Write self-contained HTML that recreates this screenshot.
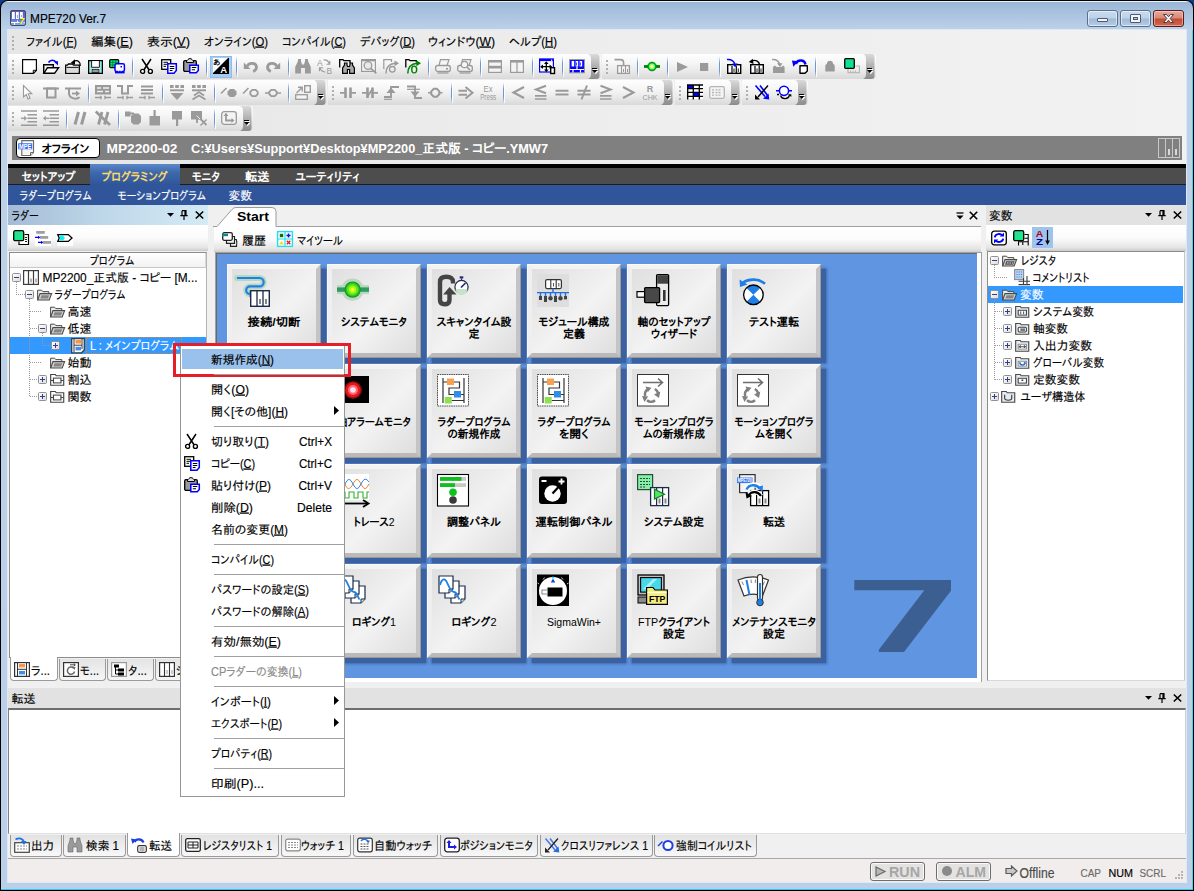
<!DOCTYPE html>
<html lang="ja"><head><meta charset="utf-8"><title>MPE720 Ver.7</title>
<style>
html,body{margin:0;padding:0}
body{width:1194px;height:891px;overflow:hidden;position:relative;background:#000;font-family:"Liberation Sans","IPAPGothic","IPAGothic","Noto Sans CJK JP",sans-serif;font-size:12px}
div{position:absolute;box-sizing:border-box}
svg{position:absolute;overflow:visible}
svg.txt{left:0;top:0;font-family:"Liberation Sans","IPAPGothic","IPAGothic","Noto Sans CJK JP",sans-serif}
</style></head>
<body>
<div style="left:0px;top:0px;width:1194px;height:891px;background:#0d3f8f"></div>
<div style="left:0px;top:0px;width:1194px;height:891px;border-radius:8px 8px 0 0;background:#000"></div>
<div style="left:1px;top:1px;width:1192px;height:889px;border-radius:7px 7px 0 0;background:linear-gradient(#e9f1f9 0,#e9f1f9 1px,#9ab6d6 1px,#a5bfdc 9px,#bcd2e9 29px,#b9d0e8 100%)"></div>
<div style="left:1192px;top:30px;width:1px;height:860px;background:#3fd2f2"></div>
<div style="left:1px;top:889px;width:1192px;height:1px;background:#2fc8ec"></div>
<div style="left:7px;top:29px;width:1180px;height:854px;background:#dfe9f4"></div>
<div class="client" style="left:8px;top:30px;width:1178px;height:852px;background:#f0f0f0"></div>
<div style="left:8px;top:30px;width:1178px;height:134px;background:linear-gradient(90deg,#e6e6e6 0,#ececec 40%,#f2f2f2 100%)"></div>
<svg style="left:10px;top:10px" width="16" height="16" viewBox="0 0 16 16"><defs><linearGradient id="tig" x1="0" y1="0" x2="0" y2="1"><stop offset="0" stop-color="#5656cc"/><stop offset=".6" stop-color="#5f74dc"/><stop offset="1" stop-color="#86b4f4"/></linearGradient></defs><rect x=".5" y=".5" width="15" height="15" rx="1.6" fill="url(#tig)" stroke="#4a4a52" stroke-width="1"/><rect x="2" y="2" width="2.8" height="7" fill="#fff"/><rect x="6" y="2" width="2.8" height="7" fill="#fff"/><rect x="10" y="2" width="2.8" height="6.5" fill="#fff"/><path d="M7.4 5V8M11.4 5V7" stroke="#888" stroke-width=".8"/><path d="M1 12.5H9.5M4.5 12.5V15M7.5 10.5V12.5" stroke="#fff" stroke-width="1"/><rect x="13.6" y="12" width="1" height="1.4" fill="#fff"/><text x="9.6" y="14.2" font-size="8.5" font-weight="bold" font-style="italic" fill="#ffff00" font-family="Liberation Sans,sans-serif">7</text></svg>
<div style="left:1087px;top:10px;width:31px;height:17px;border:1px solid #5a6f8c;border-radius:3px;background:linear-gradient(#c9dbef 0,#bcd1e8 48%,#9fbad7 52%,#b4cde6 100%);box-shadow:inset 0 0 0 1px rgba(255,255,255,.55)"></div>
<div style="left:1120px;top:10px;width:31px;height:17px;border:1px solid #5a6f8c;border-radius:3px;background:linear-gradient(#c9dbef 0,#bcd1e8 48%,#9fbad7 52%,#b4cde6 100%);box-shadow:inset 0 0 0 1px rgba(255,255,255,.55)"></div>
<div style="left:1153px;top:10px;width:31px;height:17px;border:1px solid #5a1a1a;border-radius:3px;background:linear-gradient(#e8a99a 0,#d98875 48%,#c24a32 52%,#d0674c 100%);box-shadow:inset 0 0 0 1px rgba(255,255,255,.4)"></div>
<div style="left:1097px;top:18px;width:11px;height:4px;background:#f4f4f4;border:1px solid #4a5a78;border-radius:1px"></div>
<div style="left:1130px;top:14px;width:11px;height:9px;background:#f4f4f4;border:1px solid #4a5a78;border-radius:1px"></div>
<div style="left:1133px;top:17px;width:5px;height:3px;background:#a9c2de;border:1px solid #4a5a78"></div>
<svg style="left:1162px;top:13px" width="13" height="11" viewBox="0 0 13 11"><path d="M1.5 1.5 L4.5 1.5 L6.5 3.8 L8.5 1.5 L11.5 1.5 L8.2 5.5 L11.5 9.5 L8.5 9.5 L6.5 7.2 L4.5 9.5 L1.5 9.5 L4.8 5.5 Z" fill="#f6f6f6" stroke="#4a3a4a" stroke-width="1"/></svg>
<div style="left:12px;top:36px;width:2px;height:2px;background:#b0b0b0"></div>
<div style="left:12px;top:40px;width:2px;height:2px;background:#b0b0b0"></div>
<div style="left:12px;top:44px;width:2px;height:2px;background:#b0b0b0"></div>
<div style="left:12px;top:48px;width:2px;height:2px;background:#b0b0b0"></div>
<div style="left:12px;top:136px;width:1170px;height:24px;background:#808080"></div>
<div style="left:16px;top:138px;width:84px;height:20px;background:#fff;border:1.3px solid #000;border-radius:4px"></div>
<svg style="left:18px;top:140px" width="17" height="17" viewBox="0 0 17 17"><path d="M3.8 .7H15.5V12.5L12.5 15.5H3.8Z" fill="#fff" stroke="#6a6a6a" stroke-width="1.2"/><path d="M15.5 12.5H12.5V15.5" fill="#ddd" stroke="#6a6a6a" stroke-width="1"/><path d="M5.5 11h7M5.5 13h5" stroke="#e8c8c8" stroke-width="1" stroke-dasharray="1 1"/><rect x=".2" y="3.3" width="14" height="6" fill="#2a6af0"/><text x="7.2" y="8.6" font-size="6.6" font-weight="bold" fill="#fff" text-anchor="middle" textLength="12.5" lengthAdjust="spacingAndGlyphs" font-family="Liberation Sans,sans-serif">MPE</text></svg>
<div style="left:1158px;top:138px;width:22px;height:20px;border:1px solid #c8c8c8"></div>
<div style="left:1165px;top:138px;width:1px;height:20px;background:#c8c8c8"></div>
<div style="left:1172px;top:138px;width:1px;height:20px;background:#c8c8c8"></div>
<div style="left:1168px;top:149px;width:2px;height:6px;background:#d8d8d8"></div>
<div style="left:1175px;top:149px;width:2px;height:6px;background:#d8d8d8"></div>
<div style="left:8px;top:164px;width:1178px;height:4px;background:#000"></div>
<div style="left:8px;top:168px;width:1178px;height:17px;background:#4d4d4d;border-bottom:1px solid #1c1c1c"></div>
<div style="left:90px;top:164px;width:90px;height:21px;background:linear-gradient(#5b86c8 0,#3f69ad 40%,#2f5599 100%)"></div>
<div style="left:8px;top:185px;width:1178px;height:20px;background:#30559b"></div>
<div style="left:8px;top:54px;width:593px;height:25px;background:linear-gradient(#fefefe 0,#f6f6f6 35%,#ebebeb 65%,#d9d9d9 100%);border-radius:0 3px 4px 0"></div>
<div style="left:12px;top:60px;width:2px;height:2px;background:#b0b0b0"></div>
<div style="left:12px;top:64px;width:2px;height:2px;background:#b0b0b0"></div>
<div style="left:12px;top:68px;width:2px;height:2px;background:#b0b0b0"></div>
<div style="left:12px;top:72px;width:2px;height:2px;background:#b0b0b0"></div>
<svg style="left:21px;top:58px" width="16" height="16" viewBox="0 0 16 16"><path d="M1.6 1.6H15.4V12.5L12.5 15.4H1.6Z" fill="#fff" stroke="#000" stroke-width="1.15"/><path d="M15.2 12.3H12.3V15.2" fill="none" stroke="#000" stroke-width="1"/></svg>
<svg style="left:43px;top:58px" width="16" height="16" viewBox="0 0 16 16"><path d="M.7 15.3V6.7H10.3V9.5" fill="none" stroke="#000" stroke-width="1.4"/><path d="M.8 15.3L4.5 9.7H15.6L11.6 15.3Z" fill="#fff" stroke="#000" stroke-width="1.4"/><path d="M5.5 4.5C7.5 1.2 11.5 1.5 13.2 4.8" fill="none" stroke="#0000ff" stroke-width="1.5"/><path d="M10.8 3.2H15V7.6Z" fill="#0000ff"/></svg>
<svg style="left:65px;top:58px" width="16" height="16" viewBox="0 0 16 16"><path d="M.7 15.3V7.2H2.5L3.5 6H7.5L8.5 7.2H14.3V15.3Z" fill="#fff" stroke="#000" stroke-width="1.3"/><rect x="2" y="9.5" width="11" height="4.6" fill="#dcdcdc"/><path d="M1.5 9.3H13.5" stroke="#000" stroke-width="1"/><path d="M15.2 8C15.8 3.8 12.5 1.6 9 3.2" fill="none" stroke="#000" stroke-width="1.3"/><path d="M5.8 4.8L10 1.2V6.8Z" fill="#000"/></svg>
<svg style="left:87px;top:58px" width="16" height="16" viewBox="0 0 16 16"><rect x="1.7" y="2.7" width="13.6" height="12.6" fill="#fff" stroke="#000" stroke-width="1.4"/><path d="M3.2 3.5V14.5M13.8 3.5V14.5" stroke="#20d8d8" stroke-width="1.6" stroke-dasharray="1 1"/><path d="M4.4 10.2H12.6" stroke="#20d8d8" stroke-width="1.2" stroke-dasharray="1 1"/><path d="M4.6 3V9.3H12.4V3" fill="#fff" stroke="#000" stroke-width=".9"/><rect x="5" y="11.6" width="7" height="3" fill="#9a9a9a" stroke="#000" stroke-width=".7"/></svg>
<svg style="left:109px;top:58px" width="16" height="16" viewBox="0 0 16 16"><rect x=".7" y="1.7" width="9" height="8" rx="1" fill="#00f070" stroke="#000" stroke-width="1.2"/><path d="M1 4.4H9.5M1 7H9.5M3.8 2V9.5M6.8 2V9.5" stroke="#004818" stroke-width=".55"/><rect x="6" y="5.8" width="9.4" height="7.6" rx="1.5" fill="#fff" stroke="#0000ff" stroke-width="1.5"/><rect x="11.5" y="8" width="1.5" height="1.5" fill="#0000ff"/><path d="M6 14.6H15.6" stroke="#0000ff" stroke-width="1.6"/><path d="M9 12.8h1.2M11.5 12.8h1.2" stroke="#fff" stroke-width="1"/></svg>
<div style="left:132px;top:57px;width:1px;height:20px;background:linear-gradient(rgba(120,160,220,.1),#6f97d8 30%,#6f97d8 70%,rgba(120,160,220,.1))"></div>
<div style="left:133px;top:57px;width:1px;height:20px;background:rgba(255,255,255,.9)"></div>
<svg style="left:139px;top:58px" width="16" height="16" viewBox="0 0 16 16"><path d="M3 1L10.2 12M12 1L4.8 12" stroke="#000" stroke-width="1.5" fill="none"/><circle cx="3.6" cy="13.4" r="2" fill="#fff" stroke="#000" stroke-width="1.4"/><circle cx="11.4" cy="13.4" r="2" fill="#fff" stroke="#000" stroke-width="1.4"/></svg>
<svg style="left:161px;top:58px" width="16" height="16" viewBox="0 0 16 16"><rect x=".7" y="1.7" width="9" height="9.6" fill="#fff" stroke="#000" stroke-width="1.3"/><path d="M2.5 4.3H7M2.5 6.3H6M2.5 8.3H5" stroke="#000" stroke-width="1"/><path d="M6.8 5.8H15.3V12.5L13 15.3H6.8Z" fill="#fff" stroke="#0000ff" stroke-width="1.5"/><path d="M8.8 8.5H13.3M8.8 10.5H13.3M8.8 12.5H11.5" stroke="#000" stroke-width="1"/></svg>
<svg style="left:183px;top:58px" width="16" height="16" viewBox="0 0 16 16"><rect x=".7" y="2.7" width="12.6" height="10.6" rx="1.2" fill="#9a9a9a" stroke="#000" stroke-width="1.3"/><path d="M3.5 4.5V3L5 1.5L6 .7H8L9 1.5L10.5 3V4.5Z" fill="#ddd" stroke="#000" stroke-width="1"/><path d="M6.8 7.2H15.3V12.5L13.3 14.8H6.8Z" fill="#fff" stroke="#0000ff" stroke-width="1.5"/><path d="M8.8 9.5H13.3M8.8 11.8H12" stroke="#000" stroke-width="1.1"/></svg>
<div style="left:206px;top:57px;width:1px;height:20px;background:linear-gradient(rgba(120,160,220,.1),#6f97d8 30%,#6f97d8 70%,rgba(120,160,220,.1))"></div>
<div style="left:207px;top:57px;width:1px;height:20px;background:rgba(255,255,255,.9)"></div>
<div style="left:210px;top:56px;width:22px;height:22px;background:#a9cdf2;border:1px solid #8bbcf0"></div>
<svg style="left:213px;top:58px" width="16" height="16" viewBox="0 0 16 16"><rect x="0" y="0" width="16" height="16" fill="#000"/><path d="M0 0H15L0 15Z" fill="#fff"/><text x=".2" y="7.2" font-size="7.5" fill="#000" font-weight="bold">あ</text><text x="7.2" y="15.3" font-size="9.5" fill="#fff" font-weight="bold">A</text></svg>
<div style="left:236px;top:57px;width:1px;height:20px;background:linear-gradient(rgba(120,160,220,.1),#6f97d8 30%,#6f97d8 70%,rgba(120,160,220,.1))"></div>
<div style="left:237px;top:57px;width:1px;height:20px;background:rgba(255,255,255,.9)"></div>
<svg style="left:243px;top:58px" width="16" height="16" viewBox="0 0 16 16"><path d="M.8 4.4V11H7.4Z" fill="#9a9a9a"/><path d="M4.2 8.4C5.5 4.5 12.4 4 13.4 8.5C13.8 10.7 12.3 12.5 10.2 13.6" fill="none" stroke="#9a9a9a" stroke-width="2.8"/></svg>
<svg style="left:265px;top:58px" width="16" height="16" viewBox="0 0 16 16"><path d="M15.2 4.4V11H8.6Z" fill="#9a9a9a"/><path d="M11.8 8.4C10.5 4.5 3.6 4 2.6 8.5C2.2 10.7 3.7 12.5 5.8 13.6" fill="none" stroke="#9a9a9a" stroke-width="2.8"/></svg>
<div style="left:288px;top:57px;width:1px;height:20px;background:linear-gradient(rgba(120,160,220,.1),#6f97d8 30%,#6f97d8 70%,rgba(120,160,220,.1))"></div>
<div style="left:289px;top:57px;width:1px;height:20px;background:rgba(255,255,255,.9)"></div>
<svg style="left:295px;top:58px" width="16" height="16" viewBox="0 0 16 16"><path d="M3 1H6V3L7 6.5H9L10 3V1H13V3L15.8 9V15.5H10V10H6V15.5H.2V9L3 3Z" fill="#9a9a9a"/></svg>
<svg style="left:317px;top:58px" width="16" height="16" viewBox="0 0 16 16"><text x="0" y="8" font-size="8.5" fill="#9a9a9a">A</text><text x="9.5" y="15.8" font-size="8.5" fill="#9a9a9a">B</text><path d="M6.5 2C9.5 1.5 11.5 3.5 12.3 5.8M12.8 2.8V6.3H9.5" fill="none" stroke="#9a9a9a" stroke-width="1.1"/><path d="M8.5 14C5.5 14 4 12.5 3 10.2M2.5 13.3V9.8H6" fill="none" stroke="#9a9a9a" stroke-width="1.1"/></svg>
<svg style="left:339px;top:58px" width="16" height="16" viewBox="0 0 16 16"><path d="M.7 9.5V1.7H4L5 2.7H11V5" fill="none" stroke="#000" stroke-width="1.3"/><path d="M5.5 5H8V7L8.5 8.5H10.5L11 7V5H13.5V7L15.4 10V15.3H10.6V11.5H8.4V15.3H3.6V10L5.5 7Z" fill="#aaa" stroke="#000" stroke-width="1.2"/></svg>
<svg style="left:361px;top:58px" width="16" height="16" viewBox="0 0 16 16"><rect x=".6" y="1.6" width="13.8" height="11.8" fill="#f4f4f4" stroke="#9a9a9a" stroke-width="1.2"/><path d="M.6 2.3H14.4" stroke="#9a9a9a" stroke-width="2"/><circle cx="7" cy="7.5" r="3.8" fill="#e8e8e8" stroke="#9a9a9a" stroke-width="1.3"/><path d="M9.8 10.3L15.3 15.3" stroke="#9a9a9a" stroke-width="1.8"/></svg>
<svg style="left:383px;top:58px" width="16" height="16" viewBox="0 0 16 16"><path d="M.8 11V1.6H8.5V4" fill="none" stroke="#9a9a9a" stroke-width="1.2"/><path d="M3 15.5C3 10 6 6 12 5.3" fill="none" stroke="#9a9a9a" stroke-width="1.4"/><path d="M11.5 2.5L16 5.3L11.5 8.2Z" fill="#9a9a9a"/><circle cx="9.3" cy="11.3" r="2.8" fill="none" stroke="#9a9a9a" stroke-width="1.3"/></svg>
<svg style="left:405px;top:58px" width="16" height="16" viewBox="0 0 16 16"><path d="M.8 9.5V1.6H4L5 2.6H11.3V4.2" fill="none" stroke="#000" stroke-width="1.3"/><path d="M2.8 15.5C2.8 10 6 6 12 5.3" fill="none" stroke="#008000" stroke-width="1.5"/><path d="M11.3 2.2L16 5.2L11.3 8.2Z" fill="#008000"/><ellipse cx="9.2" cy="11.5" rx="2.5" ry="3.4" fill="none" stroke="#008000" stroke-width="1.4"/></svg>
<div style="left:428px;top:57px;width:1px;height:20px;background:linear-gradient(rgba(120,160,220,.1),#6f97d8 30%,#6f97d8 70%,rgba(120,160,220,.1))"></div>
<div style="left:429px;top:57px;width:1px;height:20px;background:rgba(255,255,255,.9)"></div>
<svg style="left:435px;top:58px" width="16" height="16" viewBox="0 0 16 16"><path d="M4 7.5L5.5 1.6H14L12 7.5" fill="#f4f4f4" stroke="#9a9a9a" stroke-width="1.2"/><rect x=".7" y="7.5" width="14.6" height="6" rx="2" fill="#f0f0f0" stroke="#9a9a9a" stroke-width="1.3"/><path d="M2.5 15H13.5" stroke="#9a9a9a" stroke-width="1.2"/><rect x="11" y="10" width="2" height="1.6" fill="#9a9a9a"/></svg>
<svg style="left:457px;top:58px" width="16" height="16" viewBox="0 0 16 16"><path d="M4 7.5L5.5 1.6H14L12 7.5" fill="#f4f4f4" stroke="#9a9a9a" stroke-width="1.2"/><rect x=".7" y="7.5" width="14.6" height="6" rx="2" fill="#f0f0f0" stroke="#9a9a9a" stroke-width="1.3"/><path d="M2.5 15H13.5" stroke="#9a9a9a" stroke-width="1.2"/><circle cx="7.5" cy="6.5" r="3.2" fill="#f4f4f4" stroke="#9a9a9a" stroke-width="1.2"/><path d="M9.8 9L13 12" stroke="#9a9a9a" stroke-width="1.6"/></svg>
<div style="left:480px;top:57px;width:1px;height:20px;background:linear-gradient(rgba(120,160,220,.1),#6f97d8 30%,#6f97d8 70%,rgba(120,160,220,.1))"></div>
<div style="left:481px;top:57px;width:1px;height:20px;background:rgba(255,255,255,.9)"></div>
<svg style="left:487px;top:58px" width="16" height="16" viewBox="0 0 16 16"><rect x="1.6" y="2.6" width="12.8" height="5.8" fill="#f4f4f4" stroke="#9a9a9a" stroke-width="1.2"/><rect x="1.6" y="8.6" width="12.8" height="5.8" fill="#f4f4f4" stroke="#9a9a9a" stroke-width="1.2"/><path d="M1.6 3.5H14.4M1.6 9.5H14.4" stroke="#9a9a9a" stroke-width="2.2"/></svg>
<svg style="left:509px;top:58px" width="16" height="16" viewBox="0 0 16 16"><rect x="1.6" y="2.6" width="12.8" height="11.8" fill="#f4f4f4" stroke="#9a9a9a" stroke-width="1.2"/><path d="M1.6 3.5H14.4" stroke="#9a9a9a" stroke-width="2.2"/><path d="M8 2.6V14.4" stroke="#9a9a9a" stroke-width="1.2"/></svg>
<div style="left:532px;top:57px;width:1px;height:20px;background:linear-gradient(rgba(120,160,220,.1),#6f97d8 30%,#6f97d8 70%,rgba(120,160,220,.1))"></div>
<div style="left:533px;top:57px;width:1px;height:20px;background:rgba(255,255,255,.9)"></div>
<svg style="left:539px;top:58px" width="16" height="16" viewBox="0 0 16 16"><rect x=".6" y="1" width="13.8" height="13" fill="#fff" stroke="#0000ff" stroke-width="1.2"/><path d="M.6 2H14.4" stroke="#0000ff" stroke-width="2.2"/><rect x="12" y="1.6" width="1.2" height="1.2" fill="#fff"/><path d="M7.3 4.5V13M2.5 8.7H12" stroke="#000" stroke-width="1.3"/><path d="M7.3 3.2L9.6 6H5ZM7.3 14.2L9.6 11.4H5ZM1.2 8.7L4 6.4V11ZM13.2 8.7L10.6 6.4V11Z" fill="#000"/><rect x="11.7" y="9.7" width="3.8" height="5.8" fill="#fff" stroke="#000" stroke-width="1.4"/></svg>
<div style="left:562px;top:57px;width:1px;height:20px;background:linear-gradient(rgba(120,160,220,.1),#6f97d8 30%,#6f97d8 70%,rgba(120,160,220,.1))"></div>
<div style="left:563px;top:57px;width:1px;height:20px;background:rgba(255,255,255,.9)"></div>
<svg style="left:569px;top:58px" width="16" height="16" viewBox="0 0 16 16"><rect x=".6" y="1.6" width="14.8" height="13.2" fill="#0000ff" stroke="#9a9a9a" stroke-width="1"/><rect x="2.6" y="3" width="2.6" height="5.5" fill="#fff"/><rect x="6.6" y="3" width="2.6" height="5.5" fill="#fff"/><rect x="10.6" y="3" width="2.6" height="5.5" fill="#fff"/><path d="M7.4 4.5V7.5M11.4 4.5V7.5" stroke="#0000ff" stroke-width=".8"/><path d="M1 11.5H15M8 8.5V11.5M4 11.5V14.5M11.5 11.5V14.5" stroke="#fff" stroke-width="1.2"/></svg>
<svg style="left:588px;top:54px" width="12" height="25" viewBox="0 0 12 25"><defs><linearGradient id="ov1" x1="0" y1="0" x2="0" y2="1"><stop offset="0" stop-color="#dadada"/><stop offset=".45" stop-color="#b4b4b4"/><stop offset="1" stop-color="#8c8c8c"/></linearGradient></defs><path d="M0 0H9Q11.5 0 11.5 2.5V22Q11.5 25 8.5 25H0Q3 24 3 20V5Q3 1 0 0Z" fill="url(#ov1)"/><path d="M5 15.5H10" stroke="#fff" stroke-width="1"/><path d="M4 14.5H9" stroke="#000" stroke-width="1"/><path d="M5 17H10.5L7.7 20.2Z" fill="#fff"/><path d="M4 16H9.4L6.7 19Z" fill="#000"/></svg>
<div style="left:602px;top:54px;width:274px;height:25px;background:linear-gradient(#fefefe 0,#f6f6f6 35%,#ebebeb 65%,#d9d9d9 100%);border-radius:0 3px 4px 0"></div>
<div style="left:606px;top:60px;width:2px;height:2px;background:#b0b0b0"></div>
<div style="left:606px;top:64px;width:2px;height:2px;background:#b0b0b0"></div>
<div style="left:606px;top:68px;width:2px;height:2px;background:#b0b0b0"></div>
<div style="left:606px;top:72px;width:2px;height:2px;background:#b0b0b0"></div>
<svg style="left:614px;top:58px" width="16" height="16" viewBox="0 0 16 16"><path d="M.5 1.6H6.5C8.5 1.6 9.6 3 9.6 5V7.5" fill="none" stroke="#9a9a9a" stroke-width="1.6"/><rect x="3.6" y="7.6" width="11.8" height="7.8" fill="#f4f4f4" stroke="#9a9a9a" stroke-width="1.3"/><path d="M7.5 7.6V15.4M11.5 7.6V15.4" stroke="#9a9a9a" stroke-width="1.1"/><path d="M9.5 11V14M13.5 11V14" stroke="#9a9a9a" stroke-width="1"/></svg>
<div style="left:637px;top:57px;width:1px;height:20px;background:linear-gradient(rgba(120,160,220,.1),#6f97d8 30%,#6f97d8 70%,rgba(120,160,220,.1))"></div>
<div style="left:638px;top:57px;width:1px;height:20px;background:rgba(255,255,255,.9)"></div>
<svg style="left:644px;top:58px" width="16" height="16" viewBox="0 0 16 16"><path d="M0 8.5H16" stroke="#008000" stroke-width="2.8"/><circle cx="8" cy="8.5" r="4.3" fill="#00c000" stroke="#008000" stroke-width="1"/><circle cx="8" cy="8.5" r="3" fill="#40ffc0"/><circle cx="8" cy="8.5" r="2.3" fill="#c8ff30"/><circle cx="8" cy="8.5" r="1.3" fill="#ffffd0"/></svg>
<div style="left:667px;top:57px;width:1px;height:20px;background:linear-gradient(rgba(120,160,220,.1),#6f97d8 30%,#6f97d8 70%,rgba(120,160,220,.1))"></div>
<div style="left:668px;top:57px;width:1px;height:20px;background:rgba(255,255,255,.9)"></div>
<svg style="left:674px;top:58px" width="16" height="16" viewBox="0 0 16 16"><path d="M3 4V14L14 9Z" fill="#9a9a9a"/></svg>
<svg style="left:696px;top:58px" width="16" height="16" viewBox="0 0 16 16"><rect x="4" y="5" width="8.2" height="8" fill="#9a9a9a"/></svg>
<div style="left:719px;top:57px;width:1px;height:20px;background:linear-gradient(rgba(120,160,220,.1),#6f97d8 30%,#6f97d8 70%,rgba(120,160,220,.1))"></div>
<div style="left:720px;top:57px;width:1px;height:20px;background:rgba(255,255,255,.9)"></div>
<svg style="left:726px;top:58px" width="16" height="16" viewBox="0 0 16 16"><rect x="1.7" y="6.7" width="13" height="8.6" fill="#fff" stroke="#000" stroke-width="1.4"/><path d="M6 8V15M10.3 8V15" stroke="#000" stroke-width="1.2"/><path d="M8 10.5V14M12.3 10.5V14" stroke="#000" stroke-width=".9"/><path d="M1 1.6C5 1 8.5 3 9 7" fill="none" stroke="#0000ff" stroke-width="1.5"/><path d="M6.3 5.5H11.8L9 9.3Z" fill="#0000ff"/></svg>
<svg style="left:748px;top:58px" width="16" height="16" viewBox="0 0 16 16"><rect x="2.7" y="6.7" width="12.6" height="8.6" fill="#fff" stroke="#000" stroke-width="1.4"/><path d="M7 8V15M11.2 8V15" stroke="#000" stroke-width="1.2"/><path d="M9 10.5V14M13 10.5V14" stroke="#000" stroke-width=".9"/><path d="M3 3.5C7 1 11.5 3 11.5 7.5" fill="none" stroke="#000" stroke-width="1.4"/><path d="M4.8 0.8L.8 4L5.5 6Z" fill="#000"/></svg>
<svg style="left:770px;top:58px" width="16" height="16" viewBox="0 0 16 16"><path d="M2 1.6C6 1.3 9 3.5 9.8 7" fill="none" stroke="#9a9a9a" stroke-width="1.4"/><path d="M7 5.3H12.5L10 9Z" fill="#9a9a9a"/><path d="M3 9L5 7.6L6.5 9H11.5L13 7.6L14.6 9V15H3Z" fill="#9a9a9a"/></svg>
<svg style="left:792px;top:58px" width="16" height="16" viewBox="0 0 16 16"><path d="M4 6C5 1.5 12.5 1 13.5 6.5" fill="none" stroke="#0000ff" stroke-width="2.4"/><path d="M0 2.6L6.3 3.3L1.3 8.8Z" fill="#0000ff"/><path d="M8 7.7H15.3V13L13 15.3H8Z" fill="#fff" stroke="#000" stroke-width="1.4" stroke-linejoin="round"/></svg>
<div style="left:815px;top:57px;width:1px;height:20px;background:linear-gradient(rgba(120,160,220,.1),#6f97d8 30%,#6f97d8 70%,rgba(120,160,220,.1))"></div>
<div style="left:816px;top:57px;width:1px;height:20px;background:rgba(255,255,255,.9)"></div>
<svg style="left:822px;top:58px" width="16" height="16" viewBox="0 0 16 16"><path d="M3.3 13.5V8C3.3 6.8 4 6.3 4.8 6C5 1.6 11 1.6 11.2 6C12 6.3 12.7 6.8 12.7 8V13.5Z" fill="#9a9a9a"/></svg>
<svg style="left:844px;top:58px" width="16" height="16" viewBox="0 0 16 16"><rect x=".7" y=".7" width="9.6" height="9.6" rx="1" fill="#10e090" stroke="#000" stroke-width="1.3"/><path d="M4 11V14.6H15.4V8H11.5" fill="none" stroke="#b8b8b8" stroke-width="1.2"/><path d="M6.5 12.5V14M9 12.5V14M11.5 12.5V14" stroke="#b8b8b8" stroke-width="1"/></svg>
<svg style="left:863px;top:54px" width="12" height="25" viewBox="0 0 12 25"><defs><linearGradient id="ov2" x1="0" y1="0" x2="0" y2="1"><stop offset="0" stop-color="#dadada"/><stop offset=".45" stop-color="#b4b4b4"/><stop offset="1" stop-color="#8c8c8c"/></linearGradient></defs><path d="M0 0H9Q11.5 0 11.5 2.5V22Q11.5 25 8.5 25H0Q3 24 3 20V5Q3 1 0 0Z" fill="url(#ov2)"/><path d="M5 15.5H10" stroke="#fff" stroke-width="1"/><path d="M4 14.5H9" stroke="#000" stroke-width="1"/><path d="M5 17H10.5L7.7 20.2Z" fill="#fff"/><path d="M4 16H9.4L6.7 19Z" fill="#000"/></svg>
<div style="left:8px;top:80px;width:319px;height:25px;background:linear-gradient(#fefefe 0,#f6f6f6 35%,#ebebeb 65%,#d9d9d9 100%);border-radius:0 3px 4px 0"></div>
<div style="left:12px;top:86px;width:2px;height:2px;background:#b0b0b0"></div>
<div style="left:12px;top:90px;width:2px;height:2px;background:#b0b0b0"></div>
<div style="left:12px;top:94px;width:2px;height:2px;background:#b0b0b0"></div>
<div style="left:12px;top:98px;width:2px;height:2px;background:#b0b0b0"></div>
<svg style="left:21px;top:84px" width="16" height="16" viewBox="0 0 16 16"><path d="M2.5 1.5V13L5.2 10.5L7 15L9 14.2L7.2 9.8H10.8Z" fill="#fff" stroke="#9a9a9a" stroke-width="1.1"/></svg>
<svg style="left:43px;top:84px" width="16" height="16" viewBox="0 0 16 16"><path d="M0 4.5H16" stroke="#9a9a9a" stroke-width="2"/><rect x="4" y="4.5" width="8.5" height="9" fill="none" stroke="#9a9a9a" stroke-width="2"/></svg>
<svg style="left:65px;top:84px" width="16" height="16" viewBox="0 0 16 16"><path d="M0 4.5H16" stroke="#9a9a9a" stroke-width="2"/><path d="M4 4.5V9C4 15.5 13 15.5 14.5 13" fill="none" stroke="#9a9a9a" stroke-width="2"/><path d="M7 9.5H12" stroke="#9a9a9a" stroke-width="1.8"/><path d="M11 6.5L15 9.5L11 12.5Z" fill="#9a9a9a"/></svg>
<div style="left:88px;top:83px;width:1px;height:20px;background:linear-gradient(rgba(120,160,220,.1),#6f97d8 30%,#6f97d8 70%,rgba(120,160,220,.1))"></div>
<div style="left:89px;top:83px;width:1px;height:20px;background:rgba(255,255,255,.9)"></div>
<svg style="left:95px;top:84px" width="16" height="16" viewBox="0 0 16 16"><rect x="0" y="1" width="16" height="9.5" fill="#9a9a9a"/><path d="M2 4H6M8 4H14M2 7.5H8M10 7.5H14" stroke="#f0f0f0" stroke-width="1.4"/><path d="M0 13.5H6M10 13.5H16M6 11.8V15.2M10 11.8V15.2" stroke="#9a9a9a" stroke-width="1.4"/></svg>
<svg style="left:117px;top:84px" width="16" height="16" viewBox="0 0 16 16"><path d="M0 2H5V9.5H11V2H16" fill="none" stroke="#9a9a9a" stroke-width="2"/><path d="M0 13.5H6M10 13.5H16M6 11.8V15.2M10 11.8V15.2" stroke="#9a9a9a" stroke-width="1.4"/></svg>
<svg style="left:139px;top:84px" width="16" height="16" viewBox="0 0 16 16"><path d="M2 2.5H14M2 6H14M2 9.5H14" stroke="#9a9a9a" stroke-width="2"/><path d="M0 13.5H6M10 13.5H16M6 11.8V15.2M10 11.8V15.2" stroke="#9a9a9a" stroke-width="1.4"/></svg>
<div style="left:162px;top:83px;width:1px;height:20px;background:linear-gradient(rgba(120,160,220,.1),#6f97d8 30%,#6f97d8 70%,rgba(120,160,220,.1))"></div>
<div style="left:163px;top:83px;width:1px;height:20px;background:rgba(255,255,255,.9)"></div>
<svg style="left:169px;top:84px" width="16" height="16" viewBox="0 0 16 16"><rect x="1" y="1" width="3.6" height="3" fill="#9a9a9a"/><rect x="6.2" y="1" width="3.6" height="3" fill="#9a9a9a"/><rect x="11.4" y="1" width="3.6" height="3" fill="#9a9a9a"/><path d="M1 6.3H15" stroke="#9a9a9a" stroke-width="2"/><path d="M1.5 9H14.5L8 16Z" fill="#9a9a9a"/></svg>
<svg style="left:191px;top:84px" width="16" height="16" viewBox="0 0 16 16"><rect x="1" y="1" width="3.6" height="3" fill="#9a9a9a"/><rect x="6.2" y="1" width="3.6" height="3" fill="#9a9a9a"/><rect x="11.4" y="1" width="3.6" height="3" fill="#9a9a9a"/><path d="M1 6.3H15" stroke="#9a9a9a" stroke-width="2"/><path d="M3 11.5L8 8L13 11.5M1.5 15.5L8 11.5L14.5 15.5" fill="none" stroke="#9a9a9a" stroke-width="1.8"/></svg>
<div style="left:214px;top:83px;width:1px;height:20px;background:linear-gradient(rgba(120,160,220,.1),#6f97d8 30%,#6f97d8 70%,rgba(120,160,220,.1))"></div>
<div style="left:215px;top:83px;width:1px;height:20px;background:rgba(255,255,255,.9)"></div>
<svg style="left:221px;top:84px" width="16" height="16" viewBox="0 0 16 16"><path d="M0 9.5L5.5 4" stroke="#9a9a9a" stroke-width="1.6"/><path d="M9 5H13L15.5 7.5V10.5L13 13H9L6.5 10.5V7.5Z" fill="#9a9a9a"/></svg>
<svg style="left:243px;top:84px" width="16" height="16" viewBox="0 0 16 16"><path d="M0 9.5L5.5 4" stroke="#9a9a9a" stroke-width="1.6"/><path d="M9.3 5.8H12.7L14.7 7.8V10.2L12.7 12.2H9.3L7.3 10.2V7.8Z" fill="none" stroke="#9a9a9a" stroke-width="1.8"/></svg>
<svg style="left:265px;top:84px" width="16" height="16" viewBox="0 0 16 16"><path d="M0 9H4.5M11.5 9H16" stroke="#9a9a9a" stroke-width="1.6"/><path d="M6.3 5.8H9.7L11.7 7.8V10.2L9.7 12.2H6.3L4.3 10.2V7.8Z" fill="none" stroke="#9a9a9a" stroke-width="1.8"/></svg>
<div style="left:288px;top:83px;width:1px;height:20px;background:linear-gradient(rgba(120,160,220,.1),#6f97d8 30%,#6f97d8 70%,rgba(120,160,220,.1))"></div>
<div style="left:289px;top:83px;width:1px;height:20px;background:rgba(255,255,255,.9)"></div>
<svg style="left:295px;top:84px" width="16" height="16" viewBox="0 0 16 16"><rect x=".7" y="10.7" width="11.6" height="4.6" fill="#f4f4f4" stroke="#9a9a9a" stroke-width="1.3"/><rect x="9.7" y="1.7" width="5.6" height="6.6" fill="#f4f4f4" stroke="#9a9a9a" stroke-width="1.4"/><path d="M1.5 9L6.5 4M3 3.3H7.2V7.5" fill="none" stroke="#9a9a9a" stroke-width="1.4"/></svg>
<svg style="left:314px;top:80px" width="12" height="25" viewBox="0 0 12 25"><defs><linearGradient id="ov3" x1="0" y1="0" x2="0" y2="1"><stop offset="0" stop-color="#dadada"/><stop offset=".45" stop-color="#b4b4b4"/><stop offset="1" stop-color="#8c8c8c"/></linearGradient></defs><path d="M0 0H9Q11.5 0 11.5 2.5V22Q11.5 25 8.5 25H0Q3 24 3 20V5Q3 1 0 0Z" fill="url(#ov3)"/><path d="M5 15.5H10" stroke="#fff" stroke-width="1"/><path d="M4 14.5H9" stroke="#000" stroke-width="1"/><path d="M5 17H10.5L7.7 20.2Z" fill="#fff"/><path d="M4 16H9.4L6.7 19Z" fill="#000"/></svg>
<div style="left:328px;top:80px;width:346px;height:25px;background:linear-gradient(#fefefe 0,#f6f6f6 35%,#ebebeb 65%,#d9d9d9 100%);border-radius:0 3px 4px 0"></div>
<div style="left:332px;top:86px;width:2px;height:2px;background:#b0b0b0"></div>
<div style="left:332px;top:90px;width:2px;height:2px;background:#b0b0b0"></div>
<div style="left:332px;top:94px;width:2px;height:2px;background:#b0b0b0"></div>
<div style="left:332px;top:98px;width:2px;height:2px;background:#b0b0b0"></div>
<svg style="left:340px;top:84px" width="16" height="16" viewBox="0 0 16 16"><path d="M0 8.8H5M11 8.8H16" stroke="#9a9a9a" stroke-width="1.8"/><path d="M5.5 3.5V14M10.5 3.5V14" stroke="#9a9a9a" stroke-width="2.6"/></svg>
<svg style="left:362px;top:84px" width="16" height="16" viewBox="0 0 16 16"><path d="M0 8.8H5M11 8.8H16" stroke="#9a9a9a" stroke-width="1.8"/><path d="M5.5 3.5V14M10.5 3.5V14" stroke="#9a9a9a" stroke-width="2.6"/><path d="M5.5 12.5L10.5 5" stroke="#9a9a9a" stroke-width="1.8"/></svg>
<svg style="left:384px;top:84px" width="16" height="16" viewBox="0 0 16 16"><path d="M0 13H7V3H15" fill="none" stroke="#9a9a9a" stroke-width="1.8"/><path d="M2.5 9H11.5L7 3.5Z" fill="#9a9a9a"/><path d="M0 15.3H8" stroke="#9a9a9a" stroke-width="1.2"/></svg>
<svg style="left:406px;top:84px" width="16" height="16" viewBox="0 0 16 16"><path d="M1 2.5H9V14H16" fill="none" stroke="#9a9a9a" stroke-width="1.8"/><path d="M4.5 7.5H13.5L9 13Z" fill="#9a9a9a"/><path d="M1 5.3H14" stroke="#9a9a9a" stroke-width="1.2"/></svg>
<svg style="left:428px;top:84px" width="16" height="16" viewBox="0 0 16 16"><path d="M0 8.8H3M11.5 8.8H14.5" stroke="#9a9a9a" stroke-width="1.6"/><path d="M5.8 4.8H8.8L11.3 7.3V10.3L8.8 12.8H5.8L3.3 10.3V7.3Z" fill="none" stroke="#9a9a9a" stroke-width="2"/></svg>
<div style="left:451px;top:83px;width:1px;height:20px;background:linear-gradient(rgba(120,160,220,.1),#6f97d8 30%,#6f97d8 70%,rgba(120,160,220,.1))"></div>
<div style="left:452px;top:83px;width:1px;height:20px;background:rgba(255,255,255,.9)"></div>
<svg style="left:458px;top:84px" width="16" height="16" viewBox="0 0 16 16"><path d="M.5 6.8H9M.5 10.8H9" stroke="#9a9a9a" stroke-width="1.9"/><path d="M7.5 3L14.5 8.8L7.5 14.6" fill="none" stroke="#9a9a9a" stroke-width="2"/></svg>
<svg style="left:480px;top:84px" width="16" height="16" viewBox="0 0 16 16"><text x="8" y="7.6" font-size="8.5" fill="#9a9a9a" text-anchor="middle" textLength="9" lengthAdjust="spacingAndGlyphs">Ex</text><text x="8.2" y="15.6" font-size="8.5" fill="#9a9a9a" text-anchor="middle" textLength="16" lengthAdjust="spacingAndGlyphs">Press</text></svg>
<div style="left:503px;top:83px;width:1px;height:20px;background:linear-gradient(rgba(120,160,220,.1),#6f97d8 30%,#6f97d8 70%,rgba(120,160,220,.1))"></div>
<div style="left:504px;top:83px;width:1px;height:20px;background:rgba(255,255,255,.9)"></div>
<svg style="left:510px;top:84px" width="16" height="16" viewBox="0 0 16 16"><path d="M14 3L3.5 8.5L14 14" fill="none" stroke="#9a9a9a" stroke-width="2.1"/></svg>
<svg style="left:532px;top:84px" width="16" height="16" viewBox="0 0 16 16"><path d="M14 1.8L4 5.5L14 9.2" fill="none" stroke="#9a9a9a" stroke-width="2"/><path d="M3 11.8H14.5M3 15H14.5" stroke="#9a9a9a" stroke-width="1.7"/></svg>
<svg style="left:554px;top:84px" width="16" height="16" viewBox="0 0 16 16"><path d="M1.5 6.7H14.5M1.5 10.5H14.5" stroke="#9a9a9a" stroke-width="2"/></svg>
<svg style="left:576px;top:84px" width="16" height="16" viewBox="0 0 16 16"><path d="M1.5 6.7H14.5M1.5 10.5H14.5" stroke="#9a9a9a" stroke-width="2"/><path d="M11 1.5L5.5 15.5" stroke="#9a9a9a" stroke-width="2"/></svg>
<svg style="left:598px;top:84px" width="16" height="16" viewBox="0 0 16 16"><path d="M2.5 1.8L12.5 5.5L2.5 9.2" fill="none" stroke="#9a9a9a" stroke-width="2"/><path d="M2 11.8H13.5M2 15H13.5" stroke="#9a9a9a" stroke-width="1.7"/></svg>
<svg style="left:620px;top:84px" width="16" height="16" viewBox="0 0 16 16"><path d="M3 3L13.5 8.5L3 14" fill="none" stroke="#9a9a9a" stroke-width="2.1"/></svg>
<svg style="left:642px;top:84px" width="16" height="16" viewBox="0 0 16 16"><text x="8" y="7.6" font-size="9" font-weight="bold" fill="#9a9a9a" text-anchor="middle">R</text><text x="8" y="15.6" font-size="8" fill="#9a9a9a" text-anchor="middle" textLength="15" lengthAdjust="spacingAndGlyphs">CHK</text></svg>
<svg style="left:661px;top:80px" width="12" height="25" viewBox="0 0 12 25"><defs><linearGradient id="ov4" x1="0" y1="0" x2="0" y2="1"><stop offset="0" stop-color="#dadada"/><stop offset=".45" stop-color="#b4b4b4"/><stop offset="1" stop-color="#8c8c8c"/></linearGradient></defs><path d="M0 0H9Q11.5 0 11.5 2.5V22Q11.5 25 8.5 25H0Q3 24 3 20V5Q3 1 0 0Z" fill="url(#ov4)"/><path d="M5 15.5H10" stroke="#fff" stroke-width="1"/><path d="M4 14.5H9" stroke="#000" stroke-width="1"/><path d="M5 17H10.5L7.7 20.2Z" fill="#fff"/><path d="M4 16H9.4L6.7 19Z" fill="#000"/></svg>
<div style="left:675px;top:80px;width:66px;height:25px;background:linear-gradient(#fefefe 0,#f6f6f6 35%,#ebebeb 65%,#d9d9d9 100%);border-radius:0 3px 4px 0"></div>
<div style="left:679px;top:86px;width:2px;height:2px;background:#b0b0b0"></div>
<div style="left:679px;top:90px;width:2px;height:2px;background:#b0b0b0"></div>
<div style="left:679px;top:94px;width:2px;height:2px;background:#b0b0b0"></div>
<div style="left:679px;top:98px;width:2px;height:2px;background:#b0b0b0"></div>
<svg style="left:687px;top:84px" width="16" height="16" viewBox="0 0 16 16"><rect x="0" y=".5" width="16" height="14.5" fill="#fff"/><rect x="1" y="1" width="5" height="3.5" fill="#0000ff"/><rect x="6.5" y="8.5" width="5.5" height="3.8" fill="#0000ff"/><path d="M0 1H16M0 4.6H16M0 8.4H16M0 12.4H16M.7 .5V15.5M6.3 .5V15.5M12.3 .5V15.5" stroke="#000" stroke-width="1.3"/></svg>
<svg style="left:709px;top:84px" width="16" height="16" viewBox="0 0 16 16"><rect x=".7" y="2.7" width="14.6" height="11.6" rx="1.5" fill="#f4f4f4" stroke="#b4b4b4" stroke-width="1.3"/><path d="M3 5.8h2M6.5 5.8h6M3 8.5h2M6.5 8.5h6M3 11.2h2M6.5 11.2h6" stroke="#b4b4b4" stroke-width="1.3" stroke-dasharray="2 1"/></svg>
<svg style="left:728px;top:80px" width="12" height="25" viewBox="0 0 12 25"><defs><linearGradient id="ov5" x1="0" y1="0" x2="0" y2="1"><stop offset="0" stop-color="#dadada"/><stop offset=".45" stop-color="#b4b4b4"/><stop offset="1" stop-color="#8c8c8c"/></linearGradient></defs><path d="M0 0H9Q11.5 0 11.5 2.5V22Q11.5 25 8.5 25H0Q3 24 3 20V5Q3 1 0 0Z" fill="url(#ov5)"/><path d="M5 15.5H10" stroke="#fff" stroke-width="1"/><path d="M4 14.5H9" stroke="#000" stroke-width="1"/><path d="M5 17H10.5L7.7 20.2Z" fill="#fff"/><path d="M4 16H9.4L6.7 19Z" fill="#000"/></svg>
<div style="left:742px;top:80px;width:66px;height:25px;background:linear-gradient(#fefefe 0,#f6f6f6 35%,#ebebeb 65%,#d9d9d9 100%);border-radius:0 3px 4px 0"></div>
<div style="left:746px;top:86px;width:2px;height:2px;background:#b0b0b0"></div>
<div style="left:746px;top:90px;width:2px;height:2px;background:#b0b0b0"></div>
<div style="left:746px;top:94px;width:2px;height:2px;background:#b0b0b0"></div>
<div style="left:746px;top:98px;width:2px;height:2px;background:#b0b0b0"></div>
<svg style="left:754px;top:84px" width="16" height="16" viewBox="0 0 16 16"><path d="M1.5 1.5L11 12.5M6 1.5L14 12" stroke="#0000ff" stroke-width="1.6"/><path d="M14 1.5L4 13" stroke="#000" stroke-width="1.4"/><path d="M1 10.5V15.5H6Z" fill="#000"/><path d="M9 14.8L15.3 15.5L14.5 9.5Z" fill="#0000ff"/></svg>
<svg style="left:776px;top:84px" width="16" height="16" viewBox="0 0 16 16"><path d="M0 6.8H3.5M12.5 6.8H16" stroke="#0000ff" stroke-width="1.5"/><circle cx="8" cy="6.8" r="4.6" fill="#fff" stroke="#0000ff" stroke-width="1.5"/><path d="M1 10.5H3M4.5 11.5C6 16 12.5 15.5 13.5 11" fill="none" stroke="#000" stroke-width="1.3"/><path d="M12 10.2H15.3V13Z" fill="#000"/></svg>
<svg style="left:795px;top:80px" width="12" height="25" viewBox="0 0 12 25"><defs><linearGradient id="ov6" x1="0" y1="0" x2="0" y2="1"><stop offset="0" stop-color="#dadada"/><stop offset=".45" stop-color="#b4b4b4"/><stop offset="1" stop-color="#8c8c8c"/></linearGradient></defs><path d="M0 0H9Q11.5 0 11.5 2.5V22Q11.5 25 8.5 25H0Q3 24 3 20V5Q3 1 0 0Z" fill="url(#ov6)"/><path d="M5 15.5H10" stroke="#fff" stroke-width="1"/><path d="M4 14.5H9" stroke="#000" stroke-width="1"/><path d="M5 17H10.5L7.7 20.2Z" fill="#fff"/><path d="M4 16H9.4L6.7 19Z" fill="#000"/></svg>
<div style="left:8px;top:106px;width:245px;height:25px;background:linear-gradient(#fefefe 0,#f6f6f6 35%,#ebebeb 65%,#d9d9d9 100%);border-radius:0 3px 4px 0"></div>
<div style="left:12px;top:112px;width:2px;height:2px;background:#b0b0b0"></div>
<div style="left:12px;top:116px;width:2px;height:2px;background:#b0b0b0"></div>
<div style="left:12px;top:120px;width:2px;height:2px;background:#b0b0b0"></div>
<div style="left:12px;top:124px;width:2px;height:2px;background:#b0b0b0"></div>
<svg style="left:21px;top:110px" width="16" height="16" viewBox="0 0 16 16"><path d="M0 1H16M6.5 4.8H16M6.5 8.3H16M6.5 11.8H16M0 15.3H16" stroke="#9a9a9a" stroke-width="1.5"/><path d="M0 8.3H4.5" stroke="#9a9a9a" stroke-width="1.3"/><path d="M3.2 5.8L6 8.3L3.2 10.8Z" fill="#9a9a9a"/></svg>
<svg style="left:43px;top:110px" width="16" height="16" viewBox="0 0 16 16"><path d="M0 1H16M6.5 4.8H16M6.5 8.3H16M6.5 11.8H16M0 15.3H16" stroke="#9a9a9a" stroke-width="1.5"/><path d="M1.5 8.3H6" stroke="#9a9a9a" stroke-width="1.3"/><path d="M2.8 5.8L0 8.3L2.8 10.8Z" fill="#9a9a9a"/></svg>
<div style="left:66px;top:109px;width:1px;height:20px;background:linear-gradient(rgba(120,160,220,.1),#6f97d8 30%,#6f97d8 70%,rgba(120,160,220,.1))"></div>
<div style="left:67px;top:109px;width:1px;height:20px;background:rgba(255,255,255,.9)"></div>
<svg style="left:73px;top:110px" width="16" height="16" viewBox="0 0 16 16"><path d="M5.5 2L2 14.5M12 2L8.5 14.5" stroke="#9a9a9a" stroke-width="3"/></svg>
<svg style="left:95px;top:110px" width="16" height="16" viewBox="0 0 16 16"><path d="M7 2L3.5 14.5M13 2L9.5 14.5" stroke="#9a9a9a" stroke-width="2.8"/><path d="M.8 1.5L15 15" stroke="#9a9a9a" stroke-width="2.8"/></svg>
<div style="left:118px;top:109px;width:1px;height:20px;background:linear-gradient(rgba(120,160,220,.1),#6f97d8 30%,#6f97d8 70%,rgba(120,160,220,.1))"></div>
<div style="left:119px;top:109px;width:1px;height:20px;background:rgba(255,255,255,.9)"></div>
<svg style="left:125px;top:110px" width="16" height="16" viewBox="0 0 16 16"><rect x="0" y="1.5" width="5.5" height="5" fill="#9a9a9a"/><path d="M5 3.5H9" stroke="#9a9a9a" stroke-width="2"/><path d="M8.5 3.5H13.5L16 6V12L13.5 14.5H8.5L6 12V6Z" fill="#9a9a9a"/></svg>
<svg style="left:147px;top:110px" width="16" height="16" viewBox="0 0 16 16"><rect x="6.5" y="0" width="2.2" height="7" fill="#9a9a9a"/><rect x="2.5" y="6" width="10.5" height="9.5" fill="#9a9a9a"/></svg>
<svg style="left:169px;top:110px" width="16" height="16" viewBox="0 0 16 16"><rect x="3" y="1" width="10" height="8.5" fill="#9a9a9a"/><rect x="7" y="9" width="2.2" height="7" fill="#9a9a9a"/></svg>
<svg style="left:191px;top:110px" width="16" height="16" viewBox="0 0 16 16"><rect x="0" y="1" width="11" height="8.5" fill="#9a9a9a"/><path d="M4.5 4L15.5 15M6 13V8.5H11" fill="none" stroke="#9a9a9a" stroke-width="1.8"/><path d="M5.5 5.5L9 9" stroke="#f0f0f0" stroke-width="1"/><path d="M15.5 9.5L9.5 15.5" stroke="#9a9a9a" stroke-width="1.5"/></svg>
<div style="left:214px;top:109px;width:1px;height:20px;background:linear-gradient(rgba(120,160,220,.1),#6f97d8 30%,#6f97d8 70%,rgba(120,160,220,.1))"></div>
<div style="left:215px;top:109px;width:1px;height:20px;background:rgba(255,255,255,.9)"></div>
<svg style="left:221px;top:110px" width="16" height="16" viewBox="0 0 16 16"><rect x=".7" y="1.7" width="14.6" height="12.6" rx="2.5" fill="#f4f4f4" stroke="#9a9a9a" stroke-width="1.3"/><path d="M5 3.5V10.5H12" fill="none" stroke="#9a9a9a" stroke-width="1.8"/><path d="M2.5 6L5 3L7.5 6ZM10.5 8L13.5 10.5L10.5 13Z" fill="#9a9a9a"/></svg>
<svg style="left:240px;top:106px" width="12" height="25" viewBox="0 0 12 25"><defs><linearGradient id="ov7" x1="0" y1="0" x2="0" y2="1"><stop offset="0" stop-color="#dadada"/><stop offset=".45" stop-color="#b4b4b4"/><stop offset="1" stop-color="#8c8c8c"/></linearGradient></defs><path d="M0 0H9Q11.5 0 11.5 2.5V22Q11.5 25 8.5 25H0Q3 24 3 20V5Q3 1 0 0Z" fill="url(#ov7)"/><path d="M5 15.5H10" stroke="#fff" stroke-width="1"/><path d="M4 14.5H9" stroke="#000" stroke-width="1"/><path d="M5 17H10.5L7.7 20.2Z" fill="#fff"/><path d="M4 16H9.4L6.7 19Z" fill="#000"/></svg>
<div style="left:8px;top:205px;width:200px;height:20px;background:linear-gradient(90deg,#a3bbd6 0,#bdd6e8 45%,#d4ebf6 100%)"></div>
<svg style="left:167px;top:213px" width="7" height="4" viewBox="0 0 7 4"><path d="M0 0H7L3.5 3.7Z" fill="#000"/></svg>
<svg style="left:180px;top:210px" width="8" height="10" viewBox="0 0 8 10"><path d="M2 .7H6V5.5M2 .7V5.5M5 .7V5.5M.3 5.6H7.7M4 5.6V10" fill="none" stroke="#000" stroke-width="1.2"/></svg>
<svg style="left:195px;top:211px" width="9" height="8" viewBox="0 0 9 8"><path d="M.8 .5L8.2 7.5M8.2 .5L.8 7.5" stroke="#000" stroke-width="1.6"/></svg>
<div style="left:8px;top:225px;width:200px;height:26px;background:linear-gradient(#ffffff 0,#fbfbfb 50%,#e4e4e4 88%,#c9c9c9 100%)"></div>
<svg style="left:13px;top:230px" width="16" height="16" viewBox="0 0 16 16"><path d="M6 11.5V14.5H15.5V4.5H11.5" fill="#fff" stroke="#000" stroke-width="1.2"/><path d="M12 7.5H14M12 9.5H14M12 11.5H14" stroke="#000" stroke-width=".9"/><rect x=".7" y=".7" width="10" height="10" rx="1.5" fill="#08ee88" stroke="#000" stroke-width="1.3"/><path d="M2.5 3h7M2.5 5.5h7M2.5 8h7" stroke="#8ab0a0" stroke-width="1" stroke-dasharray="1.5 1.5"/></svg>
<svg style="left:35px;top:230px" width="16" height="16" viewBox="0 0 16 16"><rect x="0" y="0" width="16" height="16" fill="#fff"/><rect x="1.2" y="1" width="8.6" height="2.8" fill="#a0a0a0"/><rect x="5" y="6" width="8.2" height="2.8" fill="#a0a0a0"/><rect x="8" y="11" width="8" height="2.8" fill="#a0a0a0"/><path d="M0 7.4H4.5M3 12.4H7.5" stroke="#0000ff" stroke-width="1.1"/><path d="M3 5.7L5.3 7.4L3 9.1ZM6 10.7L8.3 12.4L6 14.1Z" fill="#0000ff"/></svg>
<svg style="left:57px;top:230px" width="16" height="16" viewBox="0 0 16 16"><rect x="0" y="0" width="16" height="16" fill="#fff"/><path d="M.8 4.6H11.3L15 8L11.3 11.4H.8L2.2 8Z" fill="#fff" stroke="#000" stroke-width="1.3"/><path d="M2 5.4H6L8 8L6 10.6H2L3.2 8Z" fill="#10f0f0"/></svg>
<div style="left:8px;top:251px;width:200px;height:431px;background:#f0f0f0"></div>
<div style="left:9px;top:252px;width:198px;height:406px;background:#fff;border:1px solid #8c8c8c;border-right-color:#b4b4b4"></div>
<div style="left:10px;top:253px;width:196px;height:15px;background:linear-gradient(#fff,#f2f2f2);border-bottom:1px solid #c8c8c8;border-right:1px solid #d8d8d8"></div>
<div style="left:10px;top:337px;width:196px;height:17px;background:#3399ff"></div>
<div style="left:16px;top:282px;width:1px;height:13px;background:repeating-linear-gradient(#9a9a9a 0,#9a9a9a 1px,transparent 1px,transparent 2px)"></div>
<div style="left:16px;top:294px;width:9px;height:1px;background:repeating-linear-gradient(90deg,#9a9a9a 0,#9a9a9a 1px,transparent 1px,transparent 2px)"></div>
<div style="left:29px;top:299px;width:1px;height:98px;background:repeating-linear-gradient(#9a9a9a 0,#9a9a9a 1px,transparent 1px,transparent 2px)"></div>
<div style="left:30px;top:311px;width:12px;height:1px;background:repeating-linear-gradient(90deg,#9a9a9a 0,#9a9a9a 1px,transparent 1px,transparent 2px)"></div>
<div style="left:30px;top:328px;width:8px;height:1px;background:repeating-linear-gradient(90deg,#9a9a9a 0,#9a9a9a 1px,transparent 1px,transparent 2px)"></div>
<div style="left:30px;top:362px;width:12px;height:1px;background:repeating-linear-gradient(90deg,#9a9a9a 0,#9a9a9a 1px,transparent 1px,transparent 2px)"></div>
<div style="left:30px;top:379px;width:8px;height:1px;background:repeating-linear-gradient(90deg,#9a9a9a 0,#9a9a9a 1px,transparent 1px,transparent 2px)"></div>
<div style="left:30px;top:396px;width:8px;height:1px;background:repeating-linear-gradient(90deg,#9a9a9a 0,#9a9a9a 1px,transparent 1px,transparent 2px)"></div>
<div style="left:42px;top:333px;width:1px;height:13px;background:repeating-linear-gradient(#9a9a9a 0,#9a9a9a 1px,transparent 1px,transparent 2px)"></div>
<div style="left:42px;top:345px;width:9px;height:1px;background:repeating-linear-gradient(90deg,#9a9a9a 0,#9a9a9a 1px,transparent 1px,transparent 2px)"></div>
<div style="left:12px;top:273px;width:9px;height:9px;border:1px solid #919191;border-radius:1.5px;background:linear-gradient(135deg,#fff,#dcdcdc)"></div>
<div style="left:14px;top:277px;width:5px;height:1px;background:#2c3e8e"></div>
<svg style="left:23px;top:270px" width="16" height="16" viewBox="0 0 16 16"><rect x=".6" y=".6" width="14.8" height="13.8" fill="#fff" stroke="#3c3c3c" stroke-width="1.2"/><path d="M5.5 .6V14.4M10.5 .6V14.4" stroke="#3c3c3c" stroke-width="1.2"/><path d="M8 8.5V12.5M13 8.5V12.5" stroke="#888" stroke-width="1.2"/></svg>
<div style="left:25px;top:290px;width:9px;height:9px;border:1px solid #919191;border-radius:1.5px;background:linear-gradient(135deg,#fff,#dcdcdc)"></div>
<div style="left:27px;top:294px;width:5px;height:1px;background:#2c3e8e"></div>
<svg style="left:37px;top:288px" width="16" height="16" viewBox="0 0 16 16"><path d="M.6 12V2.2H4.6L5.8 3.6H11.8V5.6" fill="#ececec" stroke="#4a4a4a" stroke-width="1"/><path d="M.7 12L3 5.6H14.6L12.2 12Z" fill="#d2d2d2" stroke="#4a4a4a" stroke-width="1.1"/><path d="M4.6 7.3H12.2L11 10.6H3.4Z" fill="#858585"/></svg>
<svg style="left:50px;top:305px" width="16" height="16" viewBox="0 0 16 16"><path d="M.6 12V2.2H4.6L5.8 3.6H11.8V5.6" fill="#ececec" stroke="#4a4a4a" stroke-width="1"/><path d="M.7 12L3 5.6H14.6L12.2 12Z" fill="#d2d2d2" stroke="#4a4a4a" stroke-width="1.1"/><path d="M4.6 7.3H12.2L11 10.6H3.4Z" fill="#858585"/></svg>
<div style="left:38px;top:324px;width:9px;height:9px;border:1px solid #919191;border-radius:1.5px;background:linear-gradient(135deg,#fff,#dcdcdc)"></div>
<div style="left:40px;top:328px;width:5px;height:1px;background:#2c3e8e"></div>
<svg style="left:50px;top:322px" width="16" height="16" viewBox="0 0 16 16"><path d="M.6 12V2.2H4.6L5.8 3.6H11.8V5.6" fill="#ececec" stroke="#4a4a4a" stroke-width="1"/><path d="M.7 12L3 5.6H14.6L12.2 12Z" fill="#d2d2d2" stroke="#4a4a4a" stroke-width="1.1"/><path d="M4.6 7.3H12.2L11 10.6H3.4Z" fill="#858585"/></svg>
<div style="left:51px;top:341px;width:9px;height:9px;border:1px solid #919191;border-radius:1.5px;background:linear-gradient(135deg,#fff,#dcdcdc)"></div>
<div style="left:53px;top:345px;width:5px;height:1px;background:#2c3e8e"></div>
<div style="left:55px;top:343px;width:1px;height:5px;background:#2c3e8e"></div>
<svg style="left:70px;top:338px" width="16" height="16" viewBox="0 0 16 16"><path d="M1.7 .7H14.3V12L11.5 14.8H1.7Z" fill="#fff" stroke="#3c3c3c" stroke-width="1.3"/><path d="M4 1V14M12 1V11" stroke="#3c3c3c" stroke-width="1"/><rect x="5.5" y="2" width="5.5" height="3.6" fill="#f79646"/><rect x="5.5" y="8.8" width="5.5" height="3.6" fill="#3f8fe8"/><path d="M4 7.2H12" stroke="#3c3c3c" stroke-width="1"/></svg>
<div style="left:86px;top:337px;width:96px;height:17px;border:1px dotted #d08a3a"></div>
<svg style="left:50px;top:356px" width="16" height="16" viewBox="0 0 16 16"><path d="M.6 12V2.2H4.6L5.8 3.6H11.8V5.6" fill="#ececec" stroke="#4a4a4a" stroke-width="1"/><path d="M.7 12L3 5.6H14.6L12.2 12Z" fill="#d2d2d2" stroke="#4a4a4a" stroke-width="1.1"/><path d="M4.6 7.3H12.2L11 10.6H3.4Z" fill="#858585"/></svg>
<div style="left:38px;top:375px;width:9px;height:9px;border:1px solid #919191;border-radius:1.5px;background:linear-gradient(135deg,#fff,#dcdcdc)"></div>
<div style="left:40px;top:379px;width:5px;height:1px;background:#2c3e8e"></div>
<div style="left:42px;top:377px;width:1px;height:5px;background:#2c3e8e"></div>
<svg style="left:50px;top:372px" width="16" height="16" viewBox="0 0 16 16"><g transform="translate(0 1.8) scale(.96 .86)"><path d="M.7 13.4V.7H5.5L6.5 2.2H14.3V13.4Z" fill="#fff" stroke="#444" stroke-width="1.2"/><rect x="3.6" y="5" width="7.8" height="5.6" fill="none" stroke="#444" stroke-width="1.2"/><path d="M1 7.8H3.6M11.4 7.8H14" stroke="#444" stroke-width="1.1"/></g></svg>
<div style="left:38px;top:392px;width:9px;height:9px;border:1px solid #919191;border-radius:1.5px;background:linear-gradient(135deg,#fff,#dcdcdc)"></div>
<div style="left:40px;top:396px;width:5px;height:1px;background:#2c3e8e"></div>
<div style="left:42px;top:394px;width:1px;height:5px;background:#2c3e8e"></div>
<svg style="left:50px;top:389px" width="16" height="16" viewBox="0 0 16 16"><g transform="translate(0 1.8) scale(.96 .86)"><path d="M.7 13.4V.7H5.5L6.5 2.2H14.3V13.4Z" fill="#fff" stroke="#444" stroke-width="1.2"/><rect x="3.6" y="5" width="7.8" height="5.6" fill="none" stroke="#444" stroke-width="1.2"/><path d="M1 7.8H3.6M11.4 7.8H14" stroke="#444" stroke-width="1.1"/></g></svg>
<div style="left:10px;top:657px;width:48px;height:24px;background:#fff;border:1px solid #9a9a9a;border-top:none;border-radius:0 0 4px 4px"></div>
<svg style="left:14px;top:662px" width="16" height="15" viewBox="0 0 16 15"><rect x=".6" y=".6" width="14.8" height="13.8" fill="#fff" stroke="#333" stroke-width="1.2"/><path d="M3.5 1V14M12.5 1V14M3.5 7.3H12.5" stroke="#333" stroke-width="1"/><rect x="5" y="2" width="6" height="3.4" fill="#f79646"/><rect x="5" y="9" width="6" height="3.4" fill="#3f8fe8"/></svg>
<div style="left:59px;top:659px;width:47px;height:22px;background:linear-gradient(#e4e4e4,#f6f6f6);border:1px solid #9a9a9a;border-top:none;border-radius:0 0 4px 4px"></div>
<svg style="left:63px;top:662px" width="16" height="15" viewBox="0 0 16 15"><rect x=".6" y=".6" width="14.8" height="13.8" fill="#fff" stroke="#333" stroke-width="1.2"/><path d="M10.6 6.2A3.6 3.6 0 1 0 11.5 9.5" fill="none" stroke="#666" stroke-width="1.5"/><path d="M9 4.5L12.5 5L11.5 8Z" fill="#666"/><path d="M7 2.8H12M10.8 1.5L12.3 2.8L10.8 4.1" fill="none" stroke="#333" stroke-width=".9"/></svg>
<div style="left:107px;top:659px;width:47px;height:22px;background:linear-gradient(#e4e4e4,#f6f6f6);border:1px solid #9a9a9a;border-top:none;border-radius:0 0 4px 4px"></div>
<svg style="left:111px;top:662px" width="16" height="15" viewBox="0 0 16 15"><rect x=".6" y=".6" width="14.8" height="13.8" fill="#fff" stroke="#999" stroke-width="1.2"/><rect x="3" y="2.5" width="5" height="3" fill="#000"/><rect x="7" y="6.5" width="6" height="3" fill="#000"/><rect x="7" y="10.5" width="6" height="3" fill="#000"/><path d="M4.5 5V12H7M4.5 8H7" fill="none" stroke="#000" stroke-width="1"/></svg>
<div style="left:155px;top:659px;width:47px;height:22px;background:linear-gradient(#e4e4e4,#f6f6f6);border:1px solid #9a9a9a;border-top:none;border-radius:0 0 4px 4px"></div>
<svg style="left:159px;top:662px" width="16" height="15" viewBox="0 0 16 15"><rect x=".6" y=".6" width="14.8" height="13.8" fill="#fff" stroke="#333" stroke-width="1.2"/><path d="M5.5 1V14M10.5 1V14" stroke="#333" stroke-width="1.1"/><path d="M8 8V12M13 8V12" stroke="#999" stroke-width="1"/></svg>
<div style="left:208px;top:205px;width:5px;height:477px;background:#f0f0f0"></div>
<div style="left:981px;top:205px;width:5px;height:477px;background:#f0f0f0"></div>
<div style="left:986px;top:205px;width:200px;height:20px;background:#e2e2e2"></div>
<svg style="left:1145px;top:213px" width="7" height="4" viewBox="0 0 7 4"><path d="M0 0H7L3.5 3.7Z" fill="#000"/></svg>
<svg style="left:1158px;top:210px" width="8" height="10" viewBox="0 0 8 10"><path d="M2 .7H6V5.5M2 .7V5.5M5 .7V5.5M.3 5.6H7.7M4 5.6V10" fill="none" stroke="#000" stroke-width="1.2"/></svg>
<svg style="left:1173px;top:211px" width="9" height="8" viewBox="0 0 9 8"><path d="M.8 .5L8.2 7.5M8.2 .5L.8 7.5" stroke="#000" stroke-width="1.6"/></svg>
<div style="left:986px;top:225px;width:200px;height:26px;background:linear-gradient(#ffffff 0,#fbfbfb 50%,#e4e4e4 88%,#c9c9c9 100%)"></div>
<div style="left:1032px;top:227px;width:21px;height:21px;background:#9ec3ec"></div>
<svg style="left:991px;top:230px" width="16" height="16" viewBox="0 0 16 16"><rect x=".7" y="1.2" width="14.6" height="13.6" rx="2.5" fill="#fff" stroke="#000" stroke-width="1.3"/><path d="M3.8 7.3C4.3 3.6 9.5 3 11 5.5M12.2 8.7C11.7 12.4 6.5 13 5 10.5" fill="none" stroke="#0000ff" stroke-width="1.9"/><path d="M8.8 6.6H13V2.6ZM7.2 9.4H3V13.4Z" fill="#0000ff"/></svg>
<svg style="left:1013px;top:230px" width="16" height="16" viewBox="0 0 16 16"><path d="M11.5 4.5H15.3M15.2 4V15.5M11.5 8.2H15.3M5 11.8H15.3M5.5 11.8V15.5M9.8 11.8V15" fill="none" stroke="#000" stroke-width="1.1"/><rect x=".7" y=".7" width="10" height="10" rx="1.5" fill="#08ee88" stroke="#000" stroke-width="1.3"/><path d="M2.5 3h7M2.5 5.5h7M2.5 8h7" stroke="#8ab0a0" stroke-width="1" stroke-dasharray="1.5 1.5"/></svg>
<svg style="left:1035px;top:230px" width="16" height="16" viewBox="0 0 16 16"><text x="4.6" y="7" font-size="9" font-weight="bold" fill="#b00018" text-anchor="middle" textLength="7.5" lengthAdjust="spacingAndGlyphs">A</text><text x="4.6" y="15" font-size="9" font-weight="bold" fill="#00008a" text-anchor="middle" textLength="7" lengthAdjust="spacingAndGlyphs">Z</text><path d="M12.5 0V13" stroke="#000" stroke-width="1.2"/><path d="M10.2 10.5H14.8L12.5 15Z" fill="#000"/></svg>
<div style="left:986px;top:251px;width:200px;height:431px;background:#f0f0f0"></div>
<div style="left:987px;top:251px;width:198px;height:430px;background:#fff;border:1px solid #8c8c8c;border-right-color:#c8c8c8;border-bottom-color:#d8d8d8"></div>
<div style="left:988px;top:286px;width:195px;height:17px;background:#3399ff"></div>
<div style="left:994px;top:265px;width:1px;height:13px;background:repeating-linear-gradient(#9a9a9a 0,#9a9a9a 1px,transparent 1px,transparent 2px)"></div>
<div style="left:994px;top:277px;width:14px;height:1px;background:repeating-linear-gradient(90deg,#9a9a9a 0,#9a9a9a 1px,transparent 1px,transparent 2px)"></div>
<div style="left:994px;top:299px;width:1px;height:81px;background:repeating-linear-gradient(#9a9a9a 0,#9a9a9a 1px,transparent 1px,transparent 2px)"></div>
<div style="left:995px;top:311px;width:8px;height:1px;background:repeating-linear-gradient(90deg,#9a9a9a 0,#9a9a9a 1px,transparent 1px,transparent 2px)"></div>
<div style="left:995px;top:328px;width:8px;height:1px;background:repeating-linear-gradient(90deg,#9a9a9a 0,#9a9a9a 1px,transparent 1px,transparent 2px)"></div>
<div style="left:995px;top:345px;width:8px;height:1px;background:repeating-linear-gradient(90deg,#9a9a9a 0,#9a9a9a 1px,transparent 1px,transparent 2px)"></div>
<div style="left:995px;top:362px;width:8px;height:1px;background:repeating-linear-gradient(90deg,#9a9a9a 0,#9a9a9a 1px,transparent 1px,transparent 2px)"></div>
<div style="left:995px;top:379px;width:8px;height:1px;background:repeating-linear-gradient(90deg,#9a9a9a 0,#9a9a9a 1px,transparent 1px,transparent 2px)"></div>
<div style="left:990px;top:256px;width:9px;height:9px;border:1px solid #919191;border-radius:1.5px;background:linear-gradient(135deg,#fff,#dcdcdc)"></div>
<div style="left:992px;top:260px;width:5px;height:1px;background:#2c3e8e"></div>
<svg style="left:1002px;top:254px" width="16" height="16" viewBox="0 0 16 16"><path d="M.6 12V2.2H4.6L5.8 3.6H11.8V5.6" fill="#ececec" stroke="#4a4a4a" stroke-width="1"/><path d="M.7 12L3 5.6H14.6L12.2 12Z" fill="#d2d2d2" stroke="#4a4a4a" stroke-width="1.1"/><path d="M4.2 7.2H12.6L11.4 10.8H3Z" fill="#555"/><path d="M5 9H11.2" stroke="#ddd" stroke-width="1" stroke-dasharray="1.5 1"/></svg>
<svg style="left:1014px;top:269px" width="16" height="16" viewBox="0 0 16 16"><rect x=".6" y=".6" width="9" height="10" fill="#b8d4f4" stroke="#8a8a8a" stroke-width="1.1"/><path d="M2.5 3h5.5M2.5 5.5h5.5M2.5 8h5.5" stroke="#3f6fd0" stroke-width="1.1" stroke-dasharray="1 1.2"/><path d="M4.5 12.3H16M4.5 15.6H16M9.5 9V16M13 7V16" stroke="#3c3c3c" stroke-width="1.1"/></svg>
<div style="left:990px;top:290px;width:9px;height:9px;border:1px solid #919191;border-radius:1.5px;background:linear-gradient(135deg,#fff,#dcdcdc)"></div>
<div style="left:992px;top:294px;width:5px;height:1px;background:#2c3e8e"></div>
<svg style="left:1002px;top:288px" width="16" height="16" viewBox="0 0 16 16"><path d="M.6 12V2.2H4.6L5.8 3.6H11.8V5.6" fill="#ececec" stroke="#4a4a4a" stroke-width="1"/><path d="M.7 12L3 5.6H14.6L12.2 12Z" fill="#d2d2d2" stroke="#4a4a4a" stroke-width="1.1"/><path d="M4.6 7.3H12.2L11 10.6H3.4Z" fill="#858585"/></svg>
<div style="left:1003px;top:307px;width:9px;height:9px;border:1px solid #919191;border-radius:1.5px;background:linear-gradient(135deg,#fff,#dcdcdc)"></div>
<div style="left:1005px;top:311px;width:5px;height:1px;background:#2c3e8e"></div>
<div style="left:1007px;top:309px;width:1px;height:5px;background:#2c3e8e"></div>
<svg style="left:1015px;top:304px" width="16" height="16" viewBox="0 0 16 16"><g transform="translate(0 1.8) scale(.96 .86)"><path d="M.7 13.4V.7H5.5L6.5 2.2H14.3V13.4Z" fill="#e4ebf2" stroke="#4a4a4a" stroke-width="1.2"/><rect x="3.3" y="5.2" width="8.6" height="5.6" fill="#fff" stroke="#3c3c3c" stroke-width="1.1"/><path d="M6 6.5V9.8M9 6.5V9.8" stroke="#3c3c3c" stroke-width="1"/></g></svg>
<div style="left:1003px;top:324px;width:9px;height:9px;border:1px solid #919191;border-radius:1.5px;background:linear-gradient(135deg,#fff,#dcdcdc)"></div>
<div style="left:1005px;top:328px;width:5px;height:1px;background:#2c3e8e"></div>
<div style="left:1007px;top:326px;width:1px;height:5px;background:#2c3e8e"></div>
<svg style="left:1015px;top:321px" width="16" height="16" viewBox="0 0 16 16"><g transform="translate(0 1.8) scale(.96 .86)"><path d="M.7 13.4V.7H5.5L6.5 2.2H14.3V13.4Z" fill="#e4ebf2" stroke="#4a4a4a" stroke-width="1.2"/><rect x="3.3" y="5.2" width="8.6" height="5.6" rx="1.5" fill="#fff" stroke="#3c3c3c" stroke-width="1.1"/><rect x="5.5" y="6.5" width="5" height="3" fill="#777"/></g></svg>
<div style="left:1003px;top:341px;width:9px;height:9px;border:1px solid #919191;border-radius:1.5px;background:linear-gradient(135deg,#fff,#dcdcdc)"></div>
<div style="left:1005px;top:345px;width:5px;height:1px;background:#2c3e8e"></div>
<div style="left:1007px;top:343px;width:1px;height:5px;background:#2c3e8e"></div>
<svg style="left:1015px;top:338px" width="16" height="16" viewBox="0 0 16 16"><g transform="translate(0 1.8) scale(.96 .86)"><path d="M.7 13.4V.7H5.5L6.5 2.2H14.3V13.4Z" fill="#e4ebf2" stroke="#4a4a4a" stroke-width="1.2"/><rect x="3.3" y="5.2" width="8.6" height="5.6" fill="#fff" stroke="#888" stroke-width="1"/><path d="M4.5 8H10.8M6 6.5L4.3 8L6 9.5M9.3 6.5L11 8L9.3 9.5" fill="none" stroke="#555" stroke-width="1.1"/></g></svg>
<div style="left:1003px;top:358px;width:9px;height:9px;border:1px solid #919191;border-radius:1.5px;background:linear-gradient(135deg,#fff,#dcdcdc)"></div>
<div style="left:1005px;top:362px;width:5px;height:1px;background:#2c3e8e"></div>
<div style="left:1007px;top:360px;width:1px;height:5px;background:#2c3e8e"></div>
<svg style="left:1015px;top:355px" width="16" height="16" viewBox="0 0 16 16"><g transform="translate(0 1.8) scale(.96 .86)"><path d="M.7 13.4V.7H5.5L6.5 2.2H14.3V13.4Z" fill="#e4ebf2" stroke="#4a4a4a" stroke-width="1.2"/><rect x="3.3" y="5.2" width="8.6" height="5.6" fill="#fff" stroke="#888" stroke-width="1"/><path d="M5 6.3C5 10.5 10.5 10.5 10.3 7" fill="none" stroke="#2a6fd0" stroke-width="1.5"/><path d="M8.6 7.6L10.4 5.6L11.8 8Z" fill="#2a6fd0"/></g></svg>
<div style="left:1003px;top:375px;width:9px;height:9px;border:1px solid #919191;border-radius:1.5px;background:linear-gradient(135deg,#fff,#dcdcdc)"></div>
<div style="left:1005px;top:379px;width:5px;height:1px;background:#2c3e8e"></div>
<div style="left:1007px;top:377px;width:1px;height:5px;background:#2c3e8e"></div>
<svg style="left:1015px;top:372px" width="16" height="16" viewBox="0 0 16 16"><g transform="translate(0 1.8) scale(.96 .86)"><path d="M.7 13.4V.7H5.5L6.5 2.2H14.3V13.4Z" fill="#e4ebf2" stroke="#4a4a4a" stroke-width="1.2"/><rect x="3.3" y="5.2" width="8.6" height="5.6" fill="#fff" stroke="#3c3c3c" stroke-width="1.1"/><rect x="6.8" y="6.6" width="1.8" height="1.8" fill="#3c3c3c"/></g></svg>
<div style="left:990px;top:392px;width:9px;height:9px;border:1px solid #919191;border-radius:1.5px;background:linear-gradient(135deg,#fff,#dcdcdc)"></div>
<div style="left:992px;top:396px;width:5px;height:1px;background:#2c3e8e"></div>
<div style="left:994px;top:394px;width:1px;height:5px;background:#2c3e8e"></div>
<svg style="left:1001px;top:389px" width="16" height="16" viewBox="0 0 16 16"><g transform="translate(0 1.8) scale(.96 .86)"><path d="M.7 13.4V.7H5.5L6.5 2.2H14.3V13.4Z" fill="#e4ebf2" stroke="#4a4a4a" stroke-width="1.2"/><path d="M3.8 4.5V8.5C3.8 11.8 11.2 11.8 11.2 8.5V4.5" fill="none" stroke="#3c3c3c" stroke-width="1.2"/></g></svg>
<div style="left:213px;top:205px;width:768px;height:477px;background:#f0f0f0"></div>
<div style="left:213px;top:226px;width:768px;height:1px;background:#a0a0a0"></div>
<svg style="left:213px;top:205px" width="70" height="23" viewBox="0 0 70 23"><path d="M0 21.5H4L19 4.5Q20.5 2.5 23 2.5H59Q63 2.5 63 6.5V21.5" fill="#fff" stroke="#9a9a9a" stroke-width="1"/><path d="M4.5 22H62.5" stroke="#fff" stroke-width="2"/></svg>
<svg style="left:956px;top:212px" width="8" height="8" viewBox="0 0 8 8"><path d="M.5 1H7.5" stroke="#000" stroke-width="1.3"/><path d="M.5 3.5H7.5L4 7.3Z" fill="#000"/></svg>
<svg style="left:969px;top:211px" width="9" height="9" viewBox="0 0 9 9"><path d="M.8 .8L8.2 8.2M8.2 .8L.8 8.2" stroke="#000" stroke-width="1.6"/></svg>
<div style="left:214px;top:227px;width:767px;height:25px;background:linear-gradient(#ffffff 0,#fbfbfb 50%,#e4e4e4 88%,#cfcfcf 100%)"></div>
<svg style="left:221px;top:231px" width="16" height="16" viewBox="0 0 16 16"><rect x="1.7" y="1.7" width="9.6" height="7.6" rx="1.5" fill="#fff" stroke="#222" stroke-width="1.3"/><rect x="1" y="2.6" width="6" height="2.6" fill="#0a8a8a"/><path d="M5.5 9.5V12.3H13.5V5.5H11.5M9.5 12.5V15.3H15.5Q16.3 11 15.3 8.5H13.5" fill="none" stroke="#222" stroke-width="1.2"/></svg>
<svg style="left:277px;top:231px" width="16" height="16" viewBox="0 0 16 16"><rect x=".6" y=".6" width="14.8" height="14.8" fill="#fff" stroke="#20e0f0" stroke-width="1.4"/><path d="M8 1V15M1 8H15" stroke="#20e0f0" stroke-width="1.2"/><rect x="2.8" y="2.8" width="3.4" height="3.4" fill="#107010"/><path d="M9.5 4.5H13.5M11.5 2.5V6.5" stroke="#1010e0" stroke-width="1.5"/><path d="M4.5 9.8L6.8 13.5H2.2Z" fill="#f0e020"/><path d="M9.8 9.8L13.3 13.3M13.3 9.8L9.8 13.3" stroke="#e02020" stroke-width="1.3"/></svg>
<div style="left:215px;top:252px;width:767px;height:431px;background:#fff;border:1px solid #a0a0a0"></div>
<div style="left:216px;top:253px;width:761px;height:425px;border-top:1px solid #696969;border-left:1px solid #696969;background:#6096e1"></div>
<svg style="left:850px;top:576px" width="110" height="80" viewBox="850 576 110 80"><path d="M854.3 580H951V590.8L904 652H878.8V649.8L924.3 590.2H854.3Z" fill="#3c5f91"/></svg>
<div style="left:232px;top:269px;width:94px;height:94px;background:#3a5d9b;box-shadow:0 0 2.5px 1px #3f66a8;opacity:.92"></div>
<div style="left:227px;top:264px;width:94px;height:94px;border-style:solid;border-width:5px;border-color:#f3f3f3 #c4c4c4 #bababa #efefef;background:linear-gradient(135deg,#dfdfdf 0,#f3f3f3 55%,#dedede 100%)"></div>
<div style="left:227px;top:264px;width:94px;height:94px;border:1px solid;border-color:#fbfbfb #9c9c9c #989898 #f8f8f8"></div>
<svg style="left:237px;top:275px" width="32" height="32" viewBox="0 0 32 32"><path d="M0 3H22.5A4.2 4.2 0 0 1 22.5 11.4H13A3.8 3.8 0 0 0 13 19H14" fill="none" stroke="#b4d8c0" stroke-width="6" stroke-linecap="round"/><path d="M0 3H22.5A4.2 4.2 0 0 1 22.5 11.4H13A3.8 3.8 0 0 0 13 19H14" fill="none" stroke="#1f7fe6" stroke-width="2.2"/><path d="M12.5 15.5L17 19L12.5 22.5Z" fill="#1f7fe6"/><rect x="13.7" y="15.7" width="18.6" height="15.6" fill="#fff" stroke="#1c2a4a" stroke-width="1.4"/><path d="M20 15.7V31.3M26 15.7V31.3" stroke="#1c2a4a" stroke-width="1.3"/><rect x="22" y="24" width="2" height="5" fill="#888"/><rect x="28" y="24" width="2" height="5" fill="#888"/></svg>
<div style="left:332px;top:269px;width:94px;height:94px;background:#3a5d9b;box-shadow:0 0 2.5px 1px #3f66a8;opacity:.92"></div>
<div style="left:327px;top:264px;width:94px;height:94px;border-style:solid;border-width:5px;border-color:#f3f3f3 #c4c4c4 #bababa #efefef;background:linear-gradient(135deg,#dfdfdf 0,#f3f3f3 55%,#dedede 100%)"></div>
<div style="left:327px;top:264px;width:94px;height:94px;border:1px solid;border-color:#fbfbfb #9c9c9c #989898 #f8f8f8"></div>
<svg style="left:337px;top:275px" width="32" height="32" viewBox="0 0 32 32"><path d="M0 14.6H32" stroke="#b9d8bc" stroke-width="9"/><circle cx="15.6" cy="14.6" r="11.2" fill="#b9d8bc"/><path d="M0 14.6H32" stroke="#2f9b62" stroke-width="4.4"/><circle cx="15.6" cy="14.6" r="8.2" fill="#2a8a3a"/><circle cx="15.6" cy="14.6" r="7" fill="#22cc22"/><circle cx="15.6" cy="14.6" r="5.6" fill="#58ee10"/><circle cx="15.6" cy="14.6" r="3.6" fill="#b4f810"/><circle cx="15.6" cy="14.6" r="1.8" fill="#f0ff40"/></svg>
<div style="left:432px;top:269px;width:94px;height:94px;background:#3a5d9b;box-shadow:0 0 2.5px 1px #3f66a8;opacity:.92"></div>
<div style="left:427px;top:264px;width:94px;height:94px;border-style:solid;border-width:5px;border-color:#f3f3f3 #c4c4c4 #bababa #efefef;background:linear-gradient(135deg,#dfdfdf 0,#f3f3f3 55%,#dedede 100%)"></div>
<div style="left:427px;top:264px;width:94px;height:94px;border:1px solid;border-color:#fbfbfb #9c9c9c #989898 #f8f8f8"></div>
<svg style="left:437px;top:275px" width="32" height="32" viewBox="0 0 32 32"><path d="M16 8.5V7C16 3.5 13.5 1.8 9.5 1.8S3 3.5 3 7V25C3 28 5 29.3 7.8 29.3S12.5 28 12.5 25V16" fill="none" stroke="#444" stroke-width="4.4"/><path d="M6.2 19.5L12.5 12L19.5 19.5Z" fill="#444"/><circle cx="24.5" cy="12" r="6.6" fill="#fff" stroke="#1c2a4a" stroke-width="1.2"/><path d="M18.5 14A6 6 0 0 0 30.5 14Z" fill="#c4e4c8"/><rect x="22.7" y="1.3" width="3.6" height="2.2" fill="#2a2a7a"/><path d="M24.5 3.5V5.5" stroke="#2a2a7a" stroke-width="1.2"/><path d="M24 12.5L28.5 8" stroke="#2a2a7a" stroke-width="1.7"/></svg>
<div style="left:532px;top:269px;width:94px;height:94px;background:#3a5d9b;box-shadow:0 0 2.5px 1px #3f66a8;opacity:.92"></div>
<div style="left:527px;top:264px;width:94px;height:94px;border-style:solid;border-width:5px;border-color:#f3f3f3 #c4c4c4 #bababa #efefef;background:linear-gradient(135deg,#dfdfdf 0,#f3f3f3 55%,#dedede 100%)"></div>
<div style="left:527px;top:264px;width:94px;height:94px;border:1px solid;border-color:#fbfbfb #9c9c9c #989898 #f8f8f8"></div>
<svg style="left:537px;top:275px" width="32" height="32" viewBox="0 0 32 32"><rect x="0" y="-1" width="32" height="33" fill="#dedede"/><rect x="8.6" y="4.6" width="15.8" height="9" rx="1.5" fill="#fff" stroke="#333" stroke-width="1.2"/><path d="M13.8 4.6V13.6M19.2 4.6V13.6" stroke="#333" stroke-width="1.1"/><path d="M16.5 8V11.5M21.8 8V11.5" stroke="#555" stroke-width="1"/><path d="M0 17.6H32M16 13.6V17.6M3.5 17.6V21M8.5 17.6V21M13.5 17.6V21M18.5 17.6V21M23.5 17.6V21M28.5 17.6V21" stroke="#1f6fe0" stroke-width="1.4"/><rect x="2" y="21" width="3" height="4" fill="#444"/><rect x="7" y="21" width="3" height="6" fill="#444"/><circle cx="13.5" cy="23.2" r="2.2" fill="#444"/><rect x="17" y="21" width="3" height="6" fill="#444"/><circle cx="23.5" cy="23.2" r="2.2" fill="#444"/><rect x="27" y="21" width="3" height="3.4" fill="#444"/></svg>
<div style="left:632px;top:269px;width:94px;height:94px;background:#3a5d9b;box-shadow:0 0 2.5px 1px #3f66a8;opacity:.92"></div>
<div style="left:627px;top:264px;width:94px;height:94px;border-style:solid;border-width:5px;border-color:#f3f3f3 #c4c4c4 #bababa #efefef;background:linear-gradient(135deg,#dfdfdf 0,#f3f3f3 55%,#dedede 100%)"></div>
<div style="left:627px;top:264px;width:94px;height:94px;border:1px solid;border-color:#fbfbfb #9c9c9c #989898 #f8f8f8"></div>
<svg style="left:637px;top:275px" width="32" height="32" viewBox="0 0 32 32"><rect x="19.6" y="-.4" width="12" height="31" rx="1" fill="#ececec" stroke="#000" stroke-width="1.3"/><rect x="20.2" y=".2" width="10.8" height="8.5" fill="#444"/><rect x="26" y="15" width="2.6" height="11" fill="#333"/><rect x="0" y="16.6" width="8" height="5.6" fill="#fff" stroke="#000" stroke-width="1.2"/><rect x="7.6" y="12.6" width="15" height="15" rx="1" fill="#484848" stroke="#000" stroke-width="1.3"/></svg>
<div style="left:732px;top:269px;width:94px;height:94px;background:#3a5d9b;box-shadow:0 0 2.5px 1px #3f66a8;opacity:.92"></div>
<div style="left:727px;top:264px;width:94px;height:94px;border-style:solid;border-width:5px;border-color:#f3f3f3 #c4c4c4 #bababa #efefef;background:linear-gradient(135deg,#dfdfdf 0,#f3f3f3 55%,#dedede 100%)"></div>
<div style="left:727px;top:264px;width:94px;height:94px;border:1px solid;border-color:#fbfbfb #9c9c9c #989898 #f8f8f8"></div>
<svg style="left:737px;top:275px" width="32" height="32" viewBox="0 0 32 32"><circle cx="16.4" cy="19.8" r="9.8" fill="#fff"/><path d="M9.5 12.9A9.8 9.8 0 0 1 23.3 12.9L16.4 19.8ZM9.5 26.7A9.8 9.8 0 0 0 23.3 26.7L16.4 19.8Z" fill="#1f7fe6"/><circle cx="16.4" cy="19.8" r="9.8" fill="none" stroke="#000" stroke-width="1.3"/><path d="M28 8.8C22 3.5 12 3.5 6 7.5" fill="none" stroke="#1f7fe6" stroke-width="2.6"/><path d="M2.5 4.5L3 12L10.5 9.5Z" fill="#1f7fe6"/></svg>
<div style="left:232px;top:369px;width:94px;height:94px;background:#3a5d9b;box-shadow:0 0 2.5px 1px #3f66a8;opacity:.92"></div>
<div style="left:227px;top:364px;width:94px;height:94px;border-style:solid;border-width:5px;border-color:#f3f3f3 #c4c4c4 #bababa #efefef;background:linear-gradient(135deg,#dfdfdf 0,#f3f3f3 55%,#dedede 100%)"></div>
<div style="left:227px;top:364px;width:94px;height:94px;border:1px solid;border-color:#fbfbfb #9c9c9c #989898 #f8f8f8"></div>
<svg style="left:237px;top:375px" width="32" height="32" viewBox="0 0 32 32"><rect x="0" y="1" width="32" height="27" fill="#000"/><circle cx="16" cy="15" r="9" fill="#7a1010"/><circle cx="16" cy="15" r="7.6" fill="#e81818"/><circle cx="16" cy="15" r="5" fill="#ff6a7a"/><circle cx="16" cy="15" r="2.8" fill="#ffe0f0"/></svg>
<div style="left:332px;top:369px;width:94px;height:94px;background:#3a5d9b;box-shadow:0 0 2.5px 1px #3f66a8;opacity:.92"></div>
<div style="left:327px;top:364px;width:94px;height:94px;border-style:solid;border-width:5px;border-color:#f3f3f3 #c4c4c4 #bababa #efefef;background:linear-gradient(135deg,#dfdfdf 0,#f3f3f3 55%,#dedede 100%)"></div>
<div style="left:327px;top:364px;width:94px;height:94px;border:1px solid;border-color:#fbfbfb #9c9c9c #989898 #f8f8f8"></div>
<svg style="left:337px;top:375px" width="32" height="32" viewBox="0 0 32 32"><rect x="0" y="1" width="32" height="27" fill="#000"/><circle cx="16" cy="15" r="9" fill="#7a1010"/><circle cx="16" cy="15" r="7.6" fill="#e81818"/><circle cx="16" cy="15" r="5" fill="#ff6a7a"/><circle cx="16" cy="15" r="2.8" fill="#ffe0f0"/></svg>
<div style="left:432px;top:369px;width:94px;height:94px;background:#3a5d9b;box-shadow:0 0 2.5px 1px #3f66a8;opacity:.92"></div>
<div style="left:427px;top:364px;width:94px;height:94px;border-style:solid;border-width:5px;border-color:#f3f3f3 #c4c4c4 #bababa #efefef;background:linear-gradient(135deg,#dfdfdf 0,#f3f3f3 55%,#dedede 100%)"></div>
<div style="left:427px;top:364px;width:94px;height:94px;border:1px solid;border-color:#fbfbfb #9c9c9c #989898 #f8f8f8"></div>
<svg style="left:437px;top:375px" width="32" height="32" viewBox="0 0 32 32"><rect x=".5" y="-.5" width="31" height="31.5" fill="#fff" stroke="#3a3a3a" stroke-width=".9" stroke-dasharray="1.6 .7"/><path d="M6 3V28M27 3V28M6 7H10M17 7H22.5V13H12V19.5H17M24 19.5H27M14.5 25.5H27" fill="none" stroke="#333" stroke-width="1.2"/><rect x="10" y="3.5" width="7" height="6.5" fill="#f9a050"/><rect x="17" y="16" width="7" height="6.5" fill="#2f8fe8"/><rect x="7.7" y="22" width="7" height="6.5" fill="#8ee050"/></svg>
<div style="left:532px;top:369px;width:94px;height:94px;background:#3a5d9b;box-shadow:0 0 2.5px 1px #3f66a8;opacity:.92"></div>
<div style="left:527px;top:364px;width:94px;height:94px;border-style:solid;border-width:5px;border-color:#f3f3f3 #c4c4c4 #bababa #efefef;background:linear-gradient(135deg,#dfdfdf 0,#f3f3f3 55%,#dedede 100%)"></div>
<div style="left:527px;top:364px;width:94px;height:94px;border:1px solid;border-color:#fbfbfb #9c9c9c #989898 #f8f8f8"></div>
<svg style="left:537px;top:375px" width="32" height="32" viewBox="0 0 32 32"><rect x=".5" y="-.5" width="31" height="31.5" fill="#fff" stroke="#3a3a3a" stroke-width=".9" stroke-dasharray="1.6 .7"/><path d="M6 3V28M27 3V28M6 7H10M17 7H22.5V13H12V19.5H17M24 19.5H27M14.5 25.5H27" fill="none" stroke="#333" stroke-width="1.2"/><rect x="10" y="3.5" width="7" height="6.5" fill="#f9a050"/><rect x="17" y="16" width="7" height="6.5" fill="#2f8fe8"/><rect x="7.7" y="22" width="7" height="6.5" fill="#8ee050"/></svg>
<div style="left:632px;top:369px;width:94px;height:94px;background:#3a5d9b;box-shadow:0 0 2.5px 1px #3f66a8;opacity:.92"></div>
<div style="left:627px;top:364px;width:94px;height:94px;border-style:solid;border-width:5px;border-color:#f3f3f3 #c4c4c4 #bababa #efefef;background:linear-gradient(135deg,#dfdfdf 0,#f3f3f3 55%,#dedede 100%)"></div>
<div style="left:627px;top:364px;width:94px;height:94px;border:1px solid;border-color:#fbfbfb #9c9c9c #989898 #f8f8f8"></div>
<svg style="left:637px;top:375px" width="32" height="32" viewBox="0 0 32 32"><rect x=".5" y="-.5" width="31" height="31.5" fill="#fff" stroke="#333" stroke-width="1"/><path d="M6 7.5H25M21 3.5L25.5 7.5L21 11.5" fill="none" stroke="#6e6e6e" stroke-width="1.6"/><path d="M8.3 21.5A6 6 0 0 1 11.5 13.8M17.8 14A6 6 0 0 1 20.8 20.5M18 25.3A6 6 0 0 1 10 25.3" fill="none" stroke="#808080" stroke-width="2.5"/><path d="M8.5 11.5L14.5 12.8L10.8 17.2ZM23.3 16.5L22 23L17 19.5ZM5 21L11.2 21.5L7.5 27Z" fill="#808080"/></svg>
<div style="left:732px;top:369px;width:94px;height:94px;background:#3a5d9b;box-shadow:0 0 2.5px 1px #3f66a8;opacity:.92"></div>
<div style="left:727px;top:364px;width:94px;height:94px;border-style:solid;border-width:5px;border-color:#f3f3f3 #c4c4c4 #bababa #efefef;background:linear-gradient(135deg,#dfdfdf 0,#f3f3f3 55%,#dedede 100%)"></div>
<div style="left:727px;top:364px;width:94px;height:94px;border:1px solid;border-color:#fbfbfb #9c9c9c #989898 #f8f8f8"></div>
<svg style="left:737px;top:375px" width="32" height="32" viewBox="0 0 32 32"><rect x=".5" y="-.5" width="31" height="31.5" fill="#fff" stroke="#333" stroke-width="1"/><path d="M6 7.5H25M21 3.5L25.5 7.5L21 11.5" fill="none" stroke="#6e6e6e" stroke-width="1.6"/><path d="M8.3 21.5A6 6 0 0 1 11.5 13.8M17.8 14A6 6 0 0 1 20.8 20.5M18 25.3A6 6 0 0 1 10 25.3" fill="none" stroke="#808080" stroke-width="2.5"/><path d="M8.5 11.5L14.5 12.8L10.8 17.2ZM23.3 16.5L22 23L17 19.5ZM5 21L11.2 21.5L7.5 27Z" fill="#808080"/></svg>
<div style="left:232px;top:469px;width:94px;height:94px;background:#3a5d9b;box-shadow:0 0 2.5px 1px #3f66a8;opacity:.92"></div>
<div style="left:227px;top:464px;width:94px;height:94px;border-style:solid;border-width:5px;border-color:#f3f3f3 #c4c4c4 #bababa #efefef;background:linear-gradient(135deg,#dfdfdf 0,#f3f3f3 55%,#dedede 100%)"></div>
<div style="left:227px;top:464px;width:94px;height:94px;border:1px solid;border-color:#fbfbfb #9c9c9c #989898 #f8f8f8"></div>
<svg style="left:237px;top:475px" width="32" height="32" viewBox="0 0 32 32"><rect x="0" y="-1" width="32" height="26" fill="#fff"/><path d="M0 9C3 3 6 3 8 9S13 15 16 9S21 3 24 9S29 15 32 9" fill="none" stroke="#f08030" stroke-width="1"/><path d="M0 11C2 15 5 15 8 9S13 3 16 9S21 15 24 9S29 3 32 7" fill="none" stroke="#3080e0" stroke-width="1"/><path d="M0 23H3V17H8V23H12V17H17V23H21V17H26V23H30V17H32" fill="none" stroke="#30b030" stroke-width="1.1"/><path d="M0 28.5H30" stroke="#000" stroke-width="1.8"/><path d="M26 25L31.5 28.5L26 32" fill="none" stroke="#000" stroke-width="1.8"/></svg>
<div style="left:332px;top:469px;width:94px;height:94px;background:#3a5d9b;box-shadow:0 0 2.5px 1px #3f66a8;opacity:.92"></div>
<div style="left:327px;top:464px;width:94px;height:94px;border-style:solid;border-width:5px;border-color:#f3f3f3 #c4c4c4 #bababa #efefef;background:linear-gradient(135deg,#dfdfdf 0,#f3f3f3 55%,#dedede 100%)"></div>
<div style="left:327px;top:464px;width:94px;height:94px;border:1px solid;border-color:#fbfbfb #9c9c9c #989898 #f8f8f8"></div>
<svg style="left:337px;top:475px" width="32" height="32" viewBox="0 0 32 32"><rect x="0" y="-1" width="32" height="26" fill="#fff"/><path d="M0 9C3 3 6 3 8 9S13 15 16 9S21 3 24 9S29 15 32 9" fill="none" stroke="#f08030" stroke-width="1"/><path d="M0 11C2 15 5 15 8 9S13 3 16 9S21 15 24 9S29 3 32 7" fill="none" stroke="#3080e0" stroke-width="1"/><path d="M0 23H3V17H8V23H12V17H17V23H21V17H26V23H30V17H32" fill="none" stroke="#30b030" stroke-width="1.1"/><path d="M0 28.5H30" stroke="#000" stroke-width="1.8"/><path d="M26 25L31.5 28.5L26 32" fill="none" stroke="#000" stroke-width="1.8"/></svg>
<div style="left:432px;top:469px;width:94px;height:94px;background:#3a5d9b;box-shadow:0 0 2.5px 1px #3f66a8;opacity:.92"></div>
<div style="left:427px;top:464px;width:94px;height:94px;border-style:solid;border-width:5px;border-color:#f3f3f3 #c4c4c4 #bababa #efefef;background:linear-gradient(135deg,#dfdfdf 0,#f3f3f3 55%,#dedede 100%)"></div>
<div style="left:427px;top:464px;width:94px;height:94px;border:1px solid;border-color:#fbfbfb #9c9c9c #989898 #f8f8f8"></div>
<svg style="left:437px;top:475px" width="32" height="32" viewBox="0 0 32 32"><rect x=".5" y="-.5" width="31" height="31.5" fill="#fff" stroke="#000" stroke-width="1.1"/><rect x="3" y="2" width="26" height="3.8" fill="#c8c8c8"/><rect x="3" y="2" width="21.5" height="3.8" fill="#10c020"/><rect x="3" y="8.2" width="26" height="3.8" fill="#c8c8c8"/><rect x="3" y="8.2" width="15" height="3.8" fill="#10c020"/><circle cx="16" cy="17.3" r="3.8" fill="#10c020"/><circle cx="16" cy="25" r="3.8" fill="#3a3a3a"/></svg>
<div style="left:532px;top:469px;width:94px;height:94px;background:#3a5d9b;box-shadow:0 0 2.5px 1px #3f66a8;opacity:.92"></div>
<div style="left:527px;top:464px;width:94px;height:94px;border-style:solid;border-width:5px;border-color:#f3f3f3 #c4c4c4 #bababa #efefef;background:linear-gradient(135deg,#dfdfdf 0,#f3f3f3 55%,#dedede 100%)"></div>
<div style="left:527px;top:464px;width:94px;height:94px;border:1px solid;border-color:#fbfbfb #9c9c9c #989898 #f8f8f8"></div>
<svg style="left:537px;top:475px" width="32" height="32" viewBox="0 0 32 32"><rect x="2" y="1.5" width="28" height="27.5" rx="3" fill="#000"/><circle cx="15.5" cy="18.5" r="8.2" fill="#fff"/><path d="M15.5 18.5L21.5 12" stroke="#000" stroke-width="2.2"/><path d="M4.5 6H9.5M21.5 6.5H27.5M24.5 3.5V9.5" stroke="#fff" stroke-width="1.8"/></svg>
<div style="left:632px;top:469px;width:94px;height:94px;background:#3a5d9b;box-shadow:0 0 2.5px 1px #3f66a8;opacity:.92"></div>
<div style="left:627px;top:464px;width:94px;height:94px;border-style:solid;border-width:5px;border-color:#f3f3f3 #c4c4c4 #bababa #efefef;background:linear-gradient(135deg,#dfdfdf 0,#f3f3f3 55%,#dedede 100%)"></div>
<div style="left:627px;top:464px;width:94px;height:94px;border:1px solid;border-color:#fbfbfb #9c9c9c #989898 #f8f8f8"></div>
<svg style="left:637px;top:475px" width="32" height="32" viewBox="0 0 32 32"><rect x=".6" y="-.4" width="15" height="15" fill="#86f0a8" stroke="#2a4a3a" stroke-width="1.2"/><path d="M3 3.5h10M3 6.5h10M3 9.5h10M3 12h6" stroke="#2a4a3a" stroke-width="1.1" stroke-dasharray="2 1"/><rect x="13.6" y="12.6" width="18" height="18" fill="#fff" stroke="#1c2a4a" stroke-width="1.3"/><path d="M19.6 12.6V30.6M25.6 12.6V30.6" stroke="#1c2a4a" stroke-width="1.2"/><rect x="21.5" y="23.5" width="2" height="5" fill="#888"/><rect x="27.5" y="23.5" width="2" height="5" fill="#888"/><path d="M17.5 14.3V24L27.5 19.2Z" fill="#50e860" stroke="#1a7a2a" stroke-width="1.2"/></svg>
<div style="left:732px;top:469px;width:94px;height:94px;background:#3a5d9b;box-shadow:0 0 2.5px 1px #3f66a8;opacity:.92"></div>
<div style="left:727px;top:464px;width:94px;height:94px;border-style:solid;border-width:5px;border-color:#f3f3f3 #c4c4c4 #bababa #efefef;background:linear-gradient(135deg,#dfdfdf 0,#f3f3f3 55%,#dedede 100%)"></div>
<div style="left:727px;top:464px;width:94px;height:94px;border:1px solid;border-color:#fbfbfb #9c9c9c #989898 #f8f8f8"></div>
<svg style="left:737px;top:475px" width="32" height="32" viewBox="0 0 32 32"><rect x="2.6" y="-.4" width="15.5" height="18" fill="#f4f4f4" stroke="#333" stroke-width="1.2"/><rect x="0" y="2.5" width="15.5" height="5.6" fill="#3a7af0"/><text x="7.8" y="7.4" font-size="5.5" font-weight="bold" fill="#fff" text-anchor="middle" textLength="14" lengthAdjust="spacingAndGlyphs">MPE720</text><rect x="13.6" y="15.6" width="18" height="15" fill="#fff" stroke="#000" stroke-width="1.3"/><path d="M19.6 15.6V30.6M25.6 15.6V30.6" stroke="#000" stroke-width="1.2"/><rect x="21.5" y="23.5" width="2" height="5" fill="#888"/><rect x="27.5" y="23.5" width="2" height="5" fill="#888"/><path d="M9 14C12 8.5 20 8.5 23 13" fill="none" stroke="#fff" stroke-width="5"/><path d="M9.5 14.5C12 9 20 9 22.5 13.5" fill="none" stroke="#1f7fe6" stroke-width="2.4"/><path d="M19.5 12L26 10.5L25.5 17Z" fill="#1f7fe6"/><path d="M12 19.5C14.5 16 21 16 24 21" fill="none" stroke="#fff" stroke-width="4.5"/><path d="M12 20C14.5 16 21 16 24 21" fill="none" stroke="#000" stroke-width="2.2"/><path d="M8.5 17L9.5 23.5L15 21Z" fill="#000"/></svg>
<div style="left:232px;top:569px;width:94px;height:94px;background:#3a5d9b;box-shadow:0 0 2.5px 1px #3f66a8;opacity:.92"></div>
<div style="left:227px;top:564px;width:94px;height:94px;border-style:solid;border-width:5px;border-color:#f3f3f3 #c4c4c4 #bababa #efefef;background:linear-gradient(135deg,#dfdfdf 0,#f3f3f3 55%,#dedede 100%)"></div>
<div style="left:227px;top:564px;width:94px;height:94px;border:1px solid;border-color:#fbfbfb #9c9c9c #989898 #f8f8f8"></div>
<svg style="left:237px;top:575px" width="32" height="32" viewBox="0 0 32 32"><path d="M14 11H28V24L24 28H14Z" fill="#fff" stroke="#1c2a4a" stroke-width="1.2"/><path d="M28 24H24V28" fill="#cde8cd" stroke="#1c2a4a" stroke-width="1"/><path d="M8 6H22V19L18 23H8Z" fill="#fff" stroke="#1c2a4a" stroke-width="1.2"/><path d="M22 19H18V23" fill="#cde8cd" stroke="#1c2a4a" stroke-width="1"/><path d="M2 1H16V14L12 18H2Z" fill="#fff" stroke="#1c2a4a" stroke-width="1.2"/><path d="M16 14H12V18" fill="#cde8cd" stroke="#1c2a4a" stroke-width="1"/><path d="M3 10C5 3 8 3 10 7.5S14 17 17 17S20 21 22.5 24.5" fill="none" stroke="#1f7fe6" stroke-width="1.8"/></svg>
<div style="left:332px;top:569px;width:94px;height:94px;background:#3a5d9b;box-shadow:0 0 2.5px 1px #3f66a8;opacity:.92"></div>
<div style="left:327px;top:564px;width:94px;height:94px;border-style:solid;border-width:5px;border-color:#f3f3f3 #c4c4c4 #bababa #efefef;background:linear-gradient(135deg,#dfdfdf 0,#f3f3f3 55%,#dedede 100%)"></div>
<div style="left:327px;top:564px;width:94px;height:94px;border:1px solid;border-color:#fbfbfb #9c9c9c #989898 #f8f8f8"></div>
<svg style="left:337px;top:575px" width="32" height="32" viewBox="0 0 32 32"><path d="M14 11H28V24L24 28H14Z" fill="#fff" stroke="#1c2a4a" stroke-width="1.2"/><path d="M28 24H24V28" fill="#cde8cd" stroke="#1c2a4a" stroke-width="1"/><path d="M8 6H22V19L18 23H8Z" fill="#fff" stroke="#1c2a4a" stroke-width="1.2"/><path d="M22 19H18V23" fill="#cde8cd" stroke="#1c2a4a" stroke-width="1"/><path d="M2 1H16V14L12 18H2Z" fill="#fff" stroke="#1c2a4a" stroke-width="1.2"/><path d="M16 14H12V18" fill="#cde8cd" stroke="#1c2a4a" stroke-width="1"/><path d="M3 10C5 3 8 3 10 7.5S14 17 17 17S20 21 22.5 24.5" fill="none" stroke="#1f7fe6" stroke-width="1.8"/></svg>
<div style="left:432px;top:569px;width:94px;height:94px;background:#3a5d9b;box-shadow:0 0 2.5px 1px #3f66a8;opacity:.92"></div>
<div style="left:427px;top:564px;width:94px;height:94px;border-style:solid;border-width:5px;border-color:#f3f3f3 #c4c4c4 #bababa #efefef;background:linear-gradient(135deg,#dfdfdf 0,#f3f3f3 55%,#dedede 100%)"></div>
<div style="left:427px;top:564px;width:94px;height:94px;border:1px solid;border-color:#fbfbfb #9c9c9c #989898 #f8f8f8"></div>
<svg style="left:437px;top:575px" width="32" height="32" viewBox="0 0 32 32"><path d="M14 11H28V24L24 28H14Z" fill="#fff" stroke="#1c2a4a" stroke-width="1.2"/><path d="M28 24H24V28" fill="#cde8cd" stroke="#1c2a4a" stroke-width="1"/><path d="M8 6H22V19L18 23H8Z" fill="#fff" stroke="#1c2a4a" stroke-width="1.2"/><path d="M22 19H18V23" fill="#cde8cd" stroke="#1c2a4a" stroke-width="1"/><path d="M2 1H16V14L12 18H2Z" fill="#fff" stroke="#1c2a4a" stroke-width="1.2"/><path d="M16 14H12V18" fill="#cde8cd" stroke="#1c2a4a" stroke-width="1"/><path d="M3 10C5 3 8 3 10 7.5S14 17 17 17S20 21 22.5 24.5" fill="none" stroke="#1f7fe6" stroke-width="1.8"/></svg>
<div style="left:532px;top:569px;width:94px;height:94px;background:#3a5d9b;box-shadow:0 0 2.5px 1px #3f66a8;opacity:.92"></div>
<div style="left:527px;top:564px;width:94px;height:94px;border-style:solid;border-width:5px;border-color:#f3f3f3 #c4c4c4 #bababa #efefef;background:linear-gradient(135deg,#dfdfdf 0,#f3f3f3 55%,#dedede 100%)"></div>
<div style="left:527px;top:564px;width:94px;height:94px;border:1px solid;border-color:#fbfbfb #9c9c9c #989898 #f8f8f8"></div>
<svg style="left:537px;top:575px" width="32" height="32" viewBox="0 0 32 32"><rect x="0" y="-.5" width="32" height="31.5" fill="#000"/><circle cx="16" cy="16" r="14" fill="#fff"/><rect x="10.5" y="12.5" width="15" height="9" fill="#000"/><rect x="5" y="15" width="5.5" height="4" fill="#fff" stroke="#888" stroke-width="1"/><path d="M16 3.5L18.2 7.5H13.8Z" fill="#1040e0"/><circle cx="16" cy="2.6" r="1.1" fill="#30e0e0"/><path d="M6 4.5L7.5 2.5M26 4.5L24.5 2.5M2 9L.5 8M30 9L31.5 8" stroke="#fff" stroke-width=".8"/></svg>
<div style="left:632px;top:569px;width:94px;height:94px;background:#3a5d9b;box-shadow:0 0 2.5px 1px #3f66a8;opacity:.92"></div>
<div style="left:627px;top:564px;width:94px;height:94px;border-style:solid;border-width:5px;border-color:#f3f3f3 #c4c4c4 #bababa #efefef;background:linear-gradient(135deg,#dfdfdf 0,#f3f3f3 55%,#dedede 100%)"></div>
<div style="left:627px;top:564px;width:94px;height:94px;border:1px solid;border-color:#fbfbfb #9c9c9c #989898 #f8f8f8"></div>
<svg style="left:637px;top:575px" width="32" height="32" viewBox="0 0 32 32"><rect x="1" y="0" width="26" height="20" fill="#c0c0c0" stroke="#000" stroke-width="1.3"/><rect x="3.6" y="2.6" width="20.8" height="14.5" fill="#48d8ea" stroke="#000" stroke-width="1.1"/><path d="M6 14L16 4H20L10 14Z" fill="#a8f0f8"/><rect x="1" y="22" width="9" height="6" fill="#8a8a8a" stroke="#000" stroke-width="1"/><path d="M9.6 29.4V12.5H16L18 15H30.4V29.4Z" fill="#f4ec80" stroke="#000" stroke-width="1.2"/><path d="M10.5 17.5H29.5" stroke="#fffce0" stroke-width="1.5"/><text x="20.2" y="27.3" font-size="9.5" font-weight="bold" fill="#000" text-anchor="middle" textLength="16.5" lengthAdjust="spacingAndGlyphs">FTP</text></svg>
<div style="left:732px;top:569px;width:94px;height:94px;background:#3a5d9b;box-shadow:0 0 2.5px 1px #3f66a8;opacity:.92"></div>
<div style="left:727px;top:564px;width:94px;height:94px;border-style:solid;border-width:5px;border-color:#f3f3f3 #c4c4c4 #bababa #efefef;background:linear-gradient(135deg,#dfdfdf 0,#f3f3f3 55%,#dedede 100%)"></div>
<div style="left:727px;top:564px;width:94px;height:94px;border:1px solid;border-color:#fbfbfb #9c9c9c #989898 #f8f8f8"></div>
<svg style="left:737px;top:575px" width="32" height="32" viewBox="0 0 32 32"><path d="M1 5C11 .8 21 .8 31.5 5L25.5 21C19 18.5 13 18.5 7 21Z" fill="#fff" stroke="#333" stroke-width="1.2"/><path d="M5 6.5L6.5 10M14 4.5L14.3 8M18.5 4.5L18.2 8M27.5 6.5L26 10" stroke="#777" stroke-width=".9"/><path d="M9.5 5L12.5 20" stroke="#1f7fe6" stroke-width="2"/><rect x="20.5" y="-.5" width="5" height="26" rx="2.5" fill="#fff" stroke="#333" stroke-width="1.2"/><circle cx="23" cy="27.5" r="3.3" fill="#1f7fe6" stroke="#333" stroke-width="1"/><rect x="22" y="8" width="2" height="19" fill="#1f7fe6"/></svg>
<div style="left:8px;top:682px;width:1178px;height:6px;background:#f0f0f0"></div>
<div style="left:8px;top:688px;width:1178px;height:20px;background:#e2e2e2"></div>
<svg style="left:1145px;top:696px" width="7" height="4" viewBox="0 0 7 4"><path d="M0 0H7L3.5 3.7Z" fill="#000"/></svg>
<svg style="left:1158px;top:693px" width="8" height="10" viewBox="0 0 8 10"><path d="M2 .7H6V5.5M2 .7V5.5M5 .7V5.5M.3 5.6H7.7M4 5.6V10" fill="none" stroke="#000" stroke-width="1.2"/></svg>
<svg style="left:1173px;top:694px" width="9" height="8" viewBox="0 0 9 8"><path d="M.8 .5L8.2 7.5M8.2 .5L.8 7.5" stroke="#000" stroke-width="1.6"/></svg>
<div style="left:8px;top:708px;width:1178px;height:126px;background:#fff;border:1px solid #828282;border-top:2px solid #6e6e6e;border-right-color:#d0d0d0;border-bottom-color:#e0e0e0"></div>
<div style="left:8px;top:834px;width:1178px;height:24px;background:#f0f0f0"></div>
<div style="left:10px;top:835px;width:52px;height:22px;background:linear-gradient(#e2e2e2,#f8f8f8);border:1px solid #9a9a9a;border-top:none;border-radius:0 0 4px 4px"></div>
<svg style="left:14px;top:837px" width="16" height="16" viewBox="0 0 16 16"><rect x=".7" y="5.7" width="14.6" height="9.6" fill="#fff" stroke="#444" stroke-width="1.2"/><path d="M3 9h10M3 12h10" stroke="#888" stroke-width="1" stroke-dasharray="2 1"/><path d="M1.5 2.5C5 .5 9 1.5 10 5" fill="none" stroke="#1f6fe6" stroke-width="1.8"/><path d="M7 4H12.5L10 8Z" fill="#1f6fe6"/></svg>
<div style="left:63px;top:835px;width:63px;height:22px;background:linear-gradient(#e2e2e2,#f8f8f8);border:1px solid #9a9a9a;border-top:none;border-radius:0 0 4px 4px"></div>
<svg style="left:67px;top:837px" width="16" height="16" viewBox="0 0 16 16"><path d="M3 1H6V3L7 6.5H9L10 3V1H13V3L15 9V15H10V10H6V15H1V9L3 3Z" fill="#9a9a9a" stroke="#666" stroke-width=".6"/></svg>
<div style="left:127px;top:833px;width:53px;height:24px;background:#fff;border:1px solid #9a9a9a;border-top:none;border-radius:0 0 4px 4px"></div>
<svg style="left:131px;top:837px" width="16" height="16" viewBox="0 0 16 16"><path d="M3.5 5C5 1.5 11 1.5 12.5 5.5" fill="none" stroke="#1f3fe0" stroke-width="2.2"/><path d="M0 1.5L5.5 2.5L1.5 7Z" fill="#1f3fe0"/><rect x="6.7" y="8.7" width="8.6" height="6.6" rx="1.5" fill="#fff" stroke="#333" stroke-width="1.2"/><path d="M8.5 11h5M8.5 13h5" stroke="#555" stroke-width=".9"/></svg>
<div style="left:181px;top:835px;width:98px;height:22px;background:linear-gradient(#e2e2e2,#f8f8f8);border:1px solid #9a9a9a;border-top:none;border-radius:0 0 4px 4px"></div>
<svg style="left:185px;top:837px" width="16" height="16" viewBox="0 0 16 16"><rect x=".7" y="1.7" width="14.6" height="12.6" rx="1.5" fill="#fff" stroke="#222" stroke-width="1.3"/><path d="M3 5H13M3 8H13M3 11H13M8 5V11M3 5V11M13 5V11" stroke="#222" stroke-width="1"/></svg>
<div style="left:281px;top:835px;width:70px;height:22px;background:linear-gradient(#e2e2e2,#f8f8f8);border:1px solid #9a9a9a;border-top:none;border-radius:0 0 4px 4px"></div>
<svg style="left:285px;top:837px" width="16" height="16" viewBox="0 0 16 16"><rect x=".7" y="2.2" width="14.6" height="11.6" rx="2" fill="#fff" stroke="#888" stroke-width="1.2"/><path d="M3 5.5h10M3 8h10M3 10.5h10" stroke="#888" stroke-width="1.1" stroke-dasharray="2 1"/></svg>
<div style="left:353px;top:835px;width:85px;height:22px;background:linear-gradient(#e2e2e2,#f8f8f8);border:1px solid #9a9a9a;border-top:none;border-radius:0 0 4px 4px"></div>
<svg style="left:357px;top:837px" width="16" height="16" viewBox="0 0 16 16"><rect x=".7" y="1.2" width="14.6" height="13.6" rx="2" fill="#fff" stroke="#333" stroke-width="1.2"/><path d="M3.5 7h9M3.5 9.5h9M3.5 12h9" stroke="#555" stroke-width="1" stroke-dasharray="2 1"/><path d="M4 4C6 1.5 10 2 11 4.5" fill="none" stroke="#1f6fe6" stroke-width="1.5"/><path d="M9 3.5H13L11.3 6.5Z" fill="#1f6fe6"/></svg>
<div style="left:440px;top:835px;width:98px;height:22px;background:linear-gradient(#e2e2e2,#f8f8f8);border:1px solid #9a9a9a;border-top:none;border-radius:0 0 4px 4px"></div>
<svg style="left:444px;top:837px" width="16" height="16" viewBox="0 0 16 16"><rect x=".7" y="1.2" width="14.6" height="13.6" rx="2.5" fill="#fff" stroke="#222" stroke-width="1.3"/><path d="M5 4.5V10H11.5" fill="none" stroke="#1f1fe0" stroke-width="2"/><path d="M2.5 6L5 3L7.5 6ZM10 7.5L13 10L10 12.5Z" fill="#1f1fe0"/></svg>
<div style="left:540px;top:835px;width:113px;height:22px;background:linear-gradient(#e2e2e2,#f8f8f8);border:1px solid #9a9a9a;border-top:none;border-radius:0 0 4px 4px"></div>
<svg style="left:544px;top:837px" width="16" height="16" viewBox="0 0 16 16"><path d="M1.5 1.5L11 13M6 1.5L14 12" stroke="#4a7ae0" stroke-width="1.5"/><path d="M14 1.5L4 13" stroke="#222" stroke-width="1.3"/><path d="M1 10.5V15.5H6Z" fill="#222"/><path d="M9 14.8L15.3 15.5L14.5 9.5Z" fill="#1f6fe6"/></svg>
<div style="left:654px;top:835px;width:103px;height:22px;background:linear-gradient(#e2e2e2,#f8f8f8);border:1px solid #9a9a9a;border-top:none;border-radius:0 0 4px 4px"></div>
<svg style="left:658px;top:837px" width="16" height="16" viewBox="0 0 16 16"><path d="M0 9L4.5 4.5" stroke="#1f3fe0" stroke-width="1.5"/><circle cx="10" cy="8.5" r="4.6" fill="#fff" stroke="#1f3fe0" stroke-width="2"/></svg>
<div style="left:8px;top:858px;width:1178px;height:24px;background:#f0edec;border-top:1px solid #a8a8a8"></div>
<div style="left:870px;top:862px;width:55px;height:19px;border:1px solid #6e6e6e;border-radius:3px;background:#e4e2e1;box-shadow:inset 0 0 0 1px #fafafa"></div>
<svg style="left:875px;top:866px" width="11" height="11" viewBox="0 0 11 11"><path d="M1 1V10L10 5.5Z" fill="#b8b8b8" stroke="#6a6a6a" stroke-width="1.2"/></svg>
<div style="left:936px;top:862px;width:55px;height:19px;border:1px solid #6e6e6e;border-radius:3px;background:#e4e2e1;box-shadow:inset 0 0 0 1px #fafafa"></div>
<div style="left:942px;top:866px;width:10px;height:10px;background:#8a8a8a;border-radius:5px"></div>
<svg style="left:1005px;top:865px" width="13" height="12" viewBox="0 0 13 12"><path d="M1 3.5H6.5V1L12 6L6.5 11V8.5H1Z" fill="#c8c8c8" stroke="#5a5a5a" stroke-width="1.2"/></svg>
<div style="left:1181px;top:877px;width:2px;height:2px;background:#b4b4b4"></div>
<div style="left:1178px;top:877px;width:2px;height:2px;background:#b4b4b4"></div>
<div style="left:1181px;top:874px;width:2px;height:2px;background:#b4b4b4"></div>
<div style="left:1175px;top:877px;width:2px;height:2px;background:#b4b4b4"></div>
<div style="left:1178px;top:874px;width:2px;height:2px;background:#b4b4b4"></div>
<div style="left:1181px;top:871px;width:2px;height:2px;background:#b4b4b4"></div>
<svg class="txt" width="1194" height="891" viewBox="0 0 1194 891">
<text x="30" y="22.5" font-size="12" fill="#000" stroke="#000" stroke-width=".15" textLength="76" lengthAdjust="spacingAndGlyphs">MPE720 Ver.7</text>
<text x="26" y="45.5" font-size="12" fill="#000" stroke="#000" stroke-width=".15" textLength="51" lengthAdjust="spacingAndGlyphs">ファイル(<tspan text-decoration="underline">F</tspan>)</text>
<text x="91" y="45.5" font-size="12" fill="#000" stroke="#000" stroke-width=".15" textLength="42" lengthAdjust="spacingAndGlyphs">編集(<tspan text-decoration="underline">E</tspan>)</text>
<text x="147" y="45.5" font-size="12" fill="#000" stroke="#000" stroke-width=".15" textLength="43" lengthAdjust="spacingAndGlyphs">表示(<tspan text-decoration="underline">V</tspan>)</text>
<text x="204" y="45.5" font-size="12" fill="#000" stroke="#000" stroke-width=".15" textLength="64" lengthAdjust="spacingAndGlyphs">オンライン(<tspan text-decoration="underline">O</tspan>)</text>
<text x="282" y="45.5" font-size="12" fill="#000" stroke="#000" stroke-width=".15" textLength="64" lengthAdjust="spacingAndGlyphs">コンパイル(<tspan text-decoration="underline">C</tspan>)</text>
<text x="360" y="45.5" font-size="12" fill="#000" stroke="#000" stroke-width=".15" textLength="55" lengthAdjust="spacingAndGlyphs">デバッグ(<tspan text-decoration="underline">D</tspan>)</text>
<text x="428" y="45.5" font-size="12" fill="#000" stroke="#000" stroke-width=".15" textLength="67" lengthAdjust="spacingAndGlyphs">ウィンドウ(<tspan text-decoration="underline">W</tspan>)</text>
<text x="509" y="45.5" font-size="12" fill="#000" stroke="#000" stroke-width=".15" textLength="48" lengthAdjust="spacingAndGlyphs">ヘルプ(<tspan text-decoration="underline">H</tspan>)</text>
<text x="41.8" y="153" font-size="12" fill="#000" font-weight="bold" textLength="47.5" lengthAdjust="spacingAndGlyphs" font-family='"Liberation Sans","IPAPGothic","IPAGothic","Noto Sans CJK JP",sans-serif'>オフライン</text>
<text x="106.5" y="153" font-size="13" fill="#fff" font-weight="bold" textLength="71" lengthAdjust="spacingAndGlyphs">MP2200-02</text>
<text x="191" y="153" font-size="13" fill="#fff" font-weight="bold" textLength="357" lengthAdjust="spacingAndGlyphs" font-family='"Liberation Sans","IPAPGothic","IPAGothic","Noto Sans CJK JP",sans-serif'>C:¥Users¥Support¥Desktop¥MP2200_正式版 - コピー.YMW7</text>
<text x="21.5" y="181" font-size="12" fill="#fff" font-weight="bold" textLength="54" lengthAdjust="spacingAndGlyphs" font-family='"Liberation Sans","IPAPGothic","IPAGothic","Noto Sans CJK JP",sans-serif'>セットアップ</text>
<text x="101.5" y="181" font-size="12" fill="#ffd966" font-weight="bold" textLength="66" lengthAdjust="spacingAndGlyphs" font-family='"Liberation Sans","IPAPGothic","IPAGothic","Noto Sans CJK JP",sans-serif'>プログラミング</text>
<text x="192" y="181" font-size="12" fill="#fff" font-weight="bold" textLength="28" lengthAdjust="spacingAndGlyphs" font-family='"Liberation Sans","IPAPGothic","IPAGothic","Noto Sans CJK JP",sans-serif'>モニタ</text>
<text x="245" y="181" font-size="12" fill="#fff" font-weight="bold" textLength="24.5" lengthAdjust="spacingAndGlyphs" font-family='"Liberation Sans","IPAPGothic","IPAGothic","Noto Sans CJK JP",sans-serif'>転送</text>
<text x="295.5" y="181" font-size="12" fill="#fff" font-weight="bold" textLength="64" lengthAdjust="spacingAndGlyphs" font-family='"Liberation Sans","IPAPGothic","IPAGothic","Noto Sans CJK JP",sans-serif'>ユーティリティ</text>
<text x="19.5" y="199.5" font-size="12" fill="#fff" stroke="#fff" stroke-width=".15" textLength="72" lengthAdjust="spacingAndGlyphs">ラダープログラム</text>
<text x="117.5" y="199.5" font-size="12" fill="#fff" stroke="#fff" stroke-width=".15" textLength="88.5" lengthAdjust="spacingAndGlyphs">モーションプログラム</text>
<text x="228.5" y="199.5" font-size="12" fill="#fff" stroke="#fff" stroke-width=".15" textLength="23.5" lengthAdjust="spacingAndGlyphs">変数</text>
<text x="11.5" y="220" font-size="12" fill="#000" stroke="#000" stroke-width=".15" textLength="27" lengthAdjust="spacingAndGlyphs">ラダー</text>
<text x="112" y="264.5" font-size="12" fill="#000" stroke="#000" stroke-width=".15" text-anchor="middle" textLength="44.5" lengthAdjust="spacingAndGlyphs">プログラム</text>
<text x="42.5" y="282" font-size="12" fill="#000" stroke="#000" stroke-width=".15" textLength="155" lengthAdjust="spacingAndGlyphs">MP2200_正式版 - コピー [M...</text>
<text x="54.5" y="299" font-size="12" fill="#000" stroke="#000" stroke-width=".15" textLength="71" lengthAdjust="spacingAndGlyphs">ラダープログラム</text>
<text x="67.5" y="316" font-size="12" fill="#000" stroke="#000" stroke-width=".15" textLength="24" lengthAdjust="spacingAndGlyphs">高速</text>
<text x="67.5" y="333" font-size="12" fill="#000" stroke="#000" stroke-width=".15" textLength="24" lengthAdjust="spacingAndGlyphs">低速</text>
<text x="90" y="350" font-size="12" fill="#fff" stroke="#fff" stroke-width=".15" textLength="89" lengthAdjust="spacingAndGlyphs">L : メインプログラム</text>
<text x="67.5" y="367" font-size="12" fill="#000" stroke="#000" stroke-width=".15" textLength="24" lengthAdjust="spacingAndGlyphs">始動</text>
<text x="67.5" y="384" font-size="12" fill="#000" stroke="#000" stroke-width=".15" textLength="24" lengthAdjust="spacingAndGlyphs">割込</text>
<text x="67.5" y="401" font-size="12" fill="#000" stroke="#000" stroke-width=".15" textLength="24" lengthAdjust="spacingAndGlyphs">関数</text>
<text x="31" y="675" font-size="12" fill="#000" stroke="#000" stroke-width=".15" textLength="19" lengthAdjust="spacingAndGlyphs">ラ...</text>
<text x="80" y="675" font-size="12" fill="#000" stroke="#000" stroke-width=".15" textLength="19" lengthAdjust="spacingAndGlyphs">モ...</text>
<text x="128" y="675" font-size="12" fill="#000" stroke="#000" stroke-width=".15" textLength="19" lengthAdjust="spacingAndGlyphs">タ...</text>
<text x="176" y="675" font-size="12" fill="#000" stroke="#000" stroke-width=".15" textLength="19" lengthAdjust="spacingAndGlyphs">シ...</text>
<text x="989" y="220" font-size="12" fill="#000" stroke="#000" stroke-width=".15" textLength="23.5" lengthAdjust="spacingAndGlyphs">変数</text>
<text x="1021" y="265" font-size="12" fill="#000" stroke="#000" stroke-width=".15" textLength="35" lengthAdjust="spacingAndGlyphs">レジスタ</text>
<text x="1032.5" y="282" font-size="12" fill="#000" stroke="#000" stroke-width=".15" textLength="57" lengthAdjust="spacingAndGlyphs">コメントリスト</text>
<text x="1020" y="299" font-size="12" fill="#fff" stroke="#fff" stroke-width=".15" textLength="23.5" lengthAdjust="spacingAndGlyphs">変数</text>
<text x="1033" y="316" font-size="12" fill="#000" stroke="#000" stroke-width=".15" textLength="61" lengthAdjust="spacingAndGlyphs">システム変数</text>
<text x="1033" y="333" font-size="12" fill="#000" stroke="#000" stroke-width=".15" textLength="35" lengthAdjust="spacingAndGlyphs">軸変数</text>
<text x="1033" y="350" font-size="12" fill="#000" stroke="#000" stroke-width=".15" textLength="59" lengthAdjust="spacingAndGlyphs">入出力変数</text>
<text x="1033" y="367" font-size="12" fill="#000" stroke="#000" stroke-width=".15" textLength="71" lengthAdjust="spacingAndGlyphs">グローバル変数</text>
<text x="1033" y="384" font-size="12" fill="#000" stroke="#000" stroke-width=".15" textLength="47" lengthAdjust="spacingAndGlyphs">定数変数</text>
<text x="1020.5" y="401" font-size="12" fill="#000" stroke="#000" stroke-width=".15" textLength="65" lengthAdjust="spacingAndGlyphs">ユーザ構造体</text>
<text x="237" y="221" font-size="13" fill="#000" font-weight="bold" textLength="32" lengthAdjust="spacingAndGlyphs">Start</text>
<text x="242" y="245" font-size="12" fill="#000" stroke="#000" stroke-width=".15" textLength="24" lengthAdjust="spacingAndGlyphs">履歴</text>
<text x="297" y="245" font-size="12" fill="#000" stroke="#000" stroke-width=".15" textLength="46" lengthAdjust="spacingAndGlyphs">マイツール</text>
<text x="274" y="326" font-size="11.5" fill="#000" font-weight="bold" text-anchor="middle" textLength="53" lengthAdjust="spacingAndGlyphs" font-family='"Liberation Sans","IPAPGothic","IPAGothic","Noto Sans CJK JP",sans-serif'>接続/切断</text>
<text x="374" y="326" font-size="11.5" fill="#000" font-weight="bold" text-anchor="middle" textLength="66" lengthAdjust="spacingAndGlyphs" font-family='"Liberation Sans","IPAPGothic","IPAGothic","Noto Sans CJK JP",sans-serif'>システムモニタ</text>
<text x="474" y="326" font-size="11.5" fill="#000" font-weight="bold" text-anchor="middle" textLength="75" lengthAdjust="spacingAndGlyphs" font-family='"Liberation Sans","IPAPGothic","IPAGothic","Noto Sans CJK JP",sans-serif'>スキャンタイム設</text>
<text x="474" y="338" font-size="11.5" fill="#000" font-weight="bold" text-anchor="middle" textLength="11" lengthAdjust="spacingAndGlyphs" font-family='"Liberation Sans","IPAPGothic","IPAGothic","Noto Sans CJK JP",sans-serif'>定</text>
<text x="574" y="326" font-size="11.5" fill="#000" font-weight="bold" text-anchor="middle" textLength="71" lengthAdjust="spacingAndGlyphs" font-family='"Liberation Sans","IPAPGothic","IPAGothic","Noto Sans CJK JP",sans-serif'>モジュール構成</text>
<text x="574" y="338" font-size="11.5" fill="#000" font-weight="bold" text-anchor="middle" textLength="22" lengthAdjust="spacingAndGlyphs" font-family='"Liberation Sans","IPAPGothic","IPAGothic","Noto Sans CJK JP",sans-serif'>定義</text>
<text x="674" y="326" font-size="11.5" fill="#000" font-weight="bold" text-anchor="middle" textLength="73" lengthAdjust="spacingAndGlyphs" font-family='"Liberation Sans","IPAPGothic","IPAGothic","Noto Sans CJK JP",sans-serif'>軸のセットアップ</text>
<text x="674" y="338" font-size="11.5" fill="#000" font-weight="bold" text-anchor="middle" textLength="46" lengthAdjust="spacingAndGlyphs" font-family='"Liberation Sans","IPAPGothic","IPAGothic","Noto Sans CJK JP",sans-serif'>ウィザード</text>
<text x="774" y="326" font-size="11.5" fill="#000" font-weight="bold" text-anchor="middle" textLength="50" lengthAdjust="spacingAndGlyphs" font-family='"Liberation Sans","IPAPGothic","IPAGothic","Noto Sans CJK JP",sans-serif'>テスト運転</text>
<text x="374" y="426" font-size="11.5" fill="#000" font-weight="bold" text-anchor="middle" textLength="74" lengthAdjust="spacingAndGlyphs" font-family='"Liberation Sans","IPAPGothic","IPAGothic","Noto Sans CJK JP",sans-serif'>軸アラームモニタ</text>
<text x="474" y="426" font-size="11.5" fill="#000" font-weight="bold" text-anchor="middle" textLength="73" lengthAdjust="spacingAndGlyphs" font-family='"Liberation Sans","IPAPGothic","IPAGothic","Noto Sans CJK JP",sans-serif'>ラダープログラム</text>
<text x="474" y="438" font-size="11.5" fill="#000" font-weight="bold" text-anchor="middle" textLength="53" lengthAdjust="spacingAndGlyphs" font-family='"Liberation Sans","IPAPGothic","IPAGothic","Noto Sans CJK JP",sans-serif'>の新規作成</text>
<text x="574" y="426" font-size="11.5" fill="#000" font-weight="bold" text-anchor="middle" textLength="73" lengthAdjust="spacingAndGlyphs" font-family='"Liberation Sans","IPAPGothic","IPAGothic","Noto Sans CJK JP",sans-serif'>ラダープログラム</text>
<text x="574" y="438" font-size="11.5" fill="#000" font-weight="bold" text-anchor="middle" textLength="30" lengthAdjust="spacingAndGlyphs" font-family='"Liberation Sans","IPAPGothic","IPAGothic","Noto Sans CJK JP",sans-serif'>を開く</text>
<text x="674" y="426" font-size="11.5" fill="#000" font-weight="bold" text-anchor="middle" textLength="79" lengthAdjust="spacingAndGlyphs" font-family='"Liberation Sans","IPAPGothic","IPAGothic","Noto Sans CJK JP",sans-serif'>モーションプログラ</text>
<text x="674" y="438" font-size="11.5" fill="#000" font-weight="bold" text-anchor="middle" textLength="62" lengthAdjust="spacingAndGlyphs" font-family='"Liberation Sans","IPAPGothic","IPAGothic","Noto Sans CJK JP",sans-serif'>ムの新規作成</text>
<text x="774" y="426" font-size="11.5" fill="#000" font-weight="bold" text-anchor="middle" textLength="79" lengthAdjust="spacingAndGlyphs" font-family='"Liberation Sans","IPAPGothic","IPAGothic","Noto Sans CJK JP",sans-serif'>モーションプログラ</text>
<text x="774" y="438" font-size="11.5" fill="#000" font-weight="bold" text-anchor="middle" textLength="38" lengthAdjust="spacingAndGlyphs" font-family='"Liberation Sans","IPAPGothic","IPAGothic","Noto Sans CJK JP",sans-serif'>ムを開く</text>
<text x="374" y="526" font-size="11.5" fill="#000" font-weight="bold" text-anchor="middle" textLength="41" lengthAdjust="spacingAndGlyphs" font-family='"Liberation Sans","IPAPGothic","IPAGothic","Noto Sans CJK JP",sans-serif'>トレース<tspan font-weight="normal">2</tspan></text>
<text x="474" y="526" font-size="11.5" fill="#000" font-weight="bold" text-anchor="middle" textLength="54" lengthAdjust="spacingAndGlyphs" font-family='"Liberation Sans","IPAPGothic","IPAGothic","Noto Sans CJK JP",sans-serif'>調整パネル</text>
<text x="574" y="526" font-size="11.5" fill="#000" font-weight="bold" text-anchor="middle" textLength="77" lengthAdjust="spacingAndGlyphs" font-family='"Liberation Sans","IPAPGothic","IPAGothic","Noto Sans CJK JP",sans-serif'>運転制御パネル</text>
<text x="674" y="526" font-size="11.5" fill="#000" font-weight="bold" text-anchor="middle" textLength="60" lengthAdjust="spacingAndGlyphs" font-family='"Liberation Sans","IPAPGothic","IPAGothic","Noto Sans CJK JP",sans-serif'>システム設定</text>
<text x="774" y="526" font-size="11.5" fill="#000" font-weight="bold" text-anchor="middle" textLength="22" lengthAdjust="spacingAndGlyphs" font-family='"Liberation Sans","IPAPGothic","IPAGothic","Noto Sans CJK JP",sans-serif'>転送</text>
<text x="374" y="626" font-size="11.5" fill="#000" font-weight="bold" text-anchor="middle" textLength="44" lengthAdjust="spacingAndGlyphs" font-family='"Liberation Sans","IPAPGothic","IPAGothic","Noto Sans CJK JP",sans-serif'>ロギング<tspan font-weight="normal">1</tspan></text>
<text x="474" y="626" font-size="11.5" fill="#000" font-weight="bold" text-anchor="middle" textLength="45" lengthAdjust="spacingAndGlyphs" font-family='"Liberation Sans","IPAPGothic","IPAGothic","Noto Sans CJK JP",sans-serif'>ロギング<tspan font-weight="normal">2</tspan></text>
<text x="574" y="626" font-size="11.5" fill="#000" font-weight="bold" text-anchor="middle" textLength="54" lengthAdjust="spacingAndGlyphs" font-family='"Liberation Sans","IPAPGothic","IPAGothic","Noto Sans CJK JP",sans-serif'><tspan font-weight="normal">SigmaWin+</tspan></text>
<text x="674" y="626" font-size="11.5" fill="#000" font-weight="bold" text-anchor="middle" textLength="72" lengthAdjust="spacingAndGlyphs" font-family='"Liberation Sans","IPAPGothic","IPAGothic","Noto Sans CJK JP",sans-serif'><tspan font-weight="normal">FTP</tspan>クライアント</text>
<text x="674" y="638" font-size="11.5" fill="#000" font-weight="bold" text-anchor="middle" textLength="22" lengthAdjust="spacingAndGlyphs" font-family='"Liberation Sans","IPAPGothic","IPAGothic","Noto Sans CJK JP",sans-serif'>設定</text>
<text x="774" y="626" font-size="11.5" fill="#000" font-weight="bold" text-anchor="middle" textLength="84" lengthAdjust="spacingAndGlyphs" font-family='"Liberation Sans","IPAPGothic","IPAGothic","Noto Sans CJK JP",sans-serif'>メンテナンスモニタ</text>
<text x="774" y="638" font-size="11.5" fill="#000" font-weight="bold" text-anchor="middle" textLength="22" lengthAdjust="spacingAndGlyphs" font-family='"Liberation Sans","IPAPGothic","IPAGothic","Noto Sans CJK JP",sans-serif'>設定</text>
<text x="11.5" y="703" font-size="12" fill="#000" stroke="#000" stroke-width=".15" textLength="24" lengthAdjust="spacingAndGlyphs">転送</text>
<text x="31" y="850" font-size="12" fill="#000" stroke="#000" stroke-width=".15" textLength="23" lengthAdjust="spacingAndGlyphs">出力</text>
<text x="86" y="850" font-size="12" fill="#000" stroke="#000" stroke-width=".15" textLength="33" lengthAdjust="spacingAndGlyphs">検索 1</text>
<text x="149" y="850" font-size="12" fill="#000" stroke="#000" stroke-width=".15" textLength="23" lengthAdjust="spacingAndGlyphs">転送</text>
<text x="203" y="850" font-size="12" fill="#000" stroke="#000" stroke-width=".15" textLength="69" lengthAdjust="spacingAndGlyphs">レジスタリスト 1</text>
<text x="301" y="850" font-size="12" fill="#000" stroke="#000" stroke-width=".15" textLength="43" lengthAdjust="spacingAndGlyphs">ウォッチ 1</text>
<text x="374" y="850" font-size="12" fill="#000" stroke="#000" stroke-width=".15" textLength="58" lengthAdjust="spacingAndGlyphs">自動ウォッチ</text>
<text x="460" y="850" font-size="12" fill="#000" stroke="#000" stroke-width=".15" textLength="73" lengthAdjust="spacingAndGlyphs">ポジションモニタ</text>
<text x="561" y="850" font-size="12" fill="#000" stroke="#000" stroke-width=".15" textLength="87" lengthAdjust="spacingAndGlyphs">クロスリファレンス 1</text>
<text x="676" y="850" font-size="12" fill="#000" stroke="#000" stroke-width=".15" textLength="76" lengthAdjust="spacingAndGlyphs">強制コイルリスト</text>
<text x="889" y="877" font-size="14" fill="#a6a6a6" font-weight="bold" textLength="31" lengthAdjust="spacingAndGlyphs">RUN</text>
<text x="955.5" y="877" font-size="14" fill="#a6a6a6" font-weight="bold" textLength="30.5" lengthAdjust="spacingAndGlyphs">ALM</text>
<text x="1019.5" y="877.5" font-size="14" fill="#4a4a4a" stroke="#4a4a4a" stroke-width=".15" textLength="35" lengthAdjust="spacingAndGlyphs">Offline</text>
<text x="1080.5" y="877" font-size="11.5" fill="#6a6a6a" stroke="#6a6a6a" stroke-width=".15" textLength="20.5" lengthAdjust="spacingAndGlyphs">CAP</text>
<text x="1108.5" y="877" font-size="11.5" fill="#000" stroke="#000" stroke-width=".15" textLength="24.5" lengthAdjust="spacingAndGlyphs">NUM</text>
<text x="1139.5" y="877" font-size="11.5" fill="#6a6a6a" stroke="#6a6a6a" stroke-width=".15" textLength="26.5" lengthAdjust="spacingAndGlyphs">SCRL</text>
</svg>
<div style="left:180px;top:345px;width:165px;height:452px;background:#fff;border:1px solid #979797"></div>
<div style="left:182px;top:349px;width:161px;height:20px;background:#9ac0ec"></div>
<div style="left:173px;top:343px;width:178px;height:34px;border:3px solid #e61e28"></div>
<div style="left:214px;top:374px;width:130px;height:1px;background:#a0a0a0"></div>
<svg style="left:334px;top:406px" width="5" height="9" viewBox="0 0 5 9"><path d="M0 0L5 4.5L0 9Z" fill="#000"/></svg>
<div style="left:214px;top:426px;width:130px;height:1px;background:#a0a0a0"></div>
<div style="left:214px;top:544px;width:130px;height:1px;background:#a0a0a0"></div>
<div style="left:214px;top:574px;width:130px;height:1px;background:#a0a0a0"></div>
<div style="left:214px;top:626px;width:130px;height:1px;background:#a0a0a0"></div>
<div style="left:214px;top:656px;width:130px;height:1px;background:#a0a0a0"></div>
<div style="left:214px;top:686px;width:130px;height:1px;background:#a0a0a0"></div>
<svg style="left:334px;top:696px" width="5" height="9" viewBox="0 0 5 9"><path d="M0 0L5 4.5L0 9Z" fill="#000"/></svg>
<svg style="left:334px;top:718px" width="5" height="9" viewBox="0 0 5 9"><path d="M0 0L5 4.5L0 9Z" fill="#000"/></svg>
<div style="left:214px;top:738px;width:130px;height:1px;background:#a0a0a0"></div>
<div style="left:214px;top:768px;width:130px;height:1px;background:#a0a0a0"></div>
<svg style="left:184px;top:433px" width="16" height="16" viewBox="0 0 16 16"><path d="M3 1L10.2 12M12 1L4.8 12" stroke="#000" stroke-width="1.5" fill="none"/><circle cx="3.6" cy="13.4" r="2" fill="#fff" stroke="#000" stroke-width="1.4"/><circle cx="11.4" cy="13.4" r="2" fill="#fff" stroke="#000" stroke-width="1.4"/></svg>
<svg style="left:184px;top:455px" width="16" height="16" viewBox="0 0 16 16"><rect x=".7" y="1.7" width="9" height="9.6" fill="#fff" stroke="#000" stroke-width="1.3"/><path d="M2.5 4.3H7M2.5 6.3H6M2.5 8.3H5" stroke="#000" stroke-width="1"/><path d="M6.8 5.8H15.3V12.5L13 15.3H6.8Z" fill="#fff" stroke="#0000ff" stroke-width="1.5"/><path d="M8.8 8.5H13.3M8.8 10.5H13.3M8.8 12.5H11.5" stroke="#000" stroke-width="1"/></svg>
<svg style="left:184px;top:477px" width="16" height="16" viewBox="0 0 16 16"><rect x=".7" y="2.7" width="12.6" height="10.6" rx="1.2" fill="#9a9a9a" stroke="#000" stroke-width="1.3"/><path d="M3.5 4.5V3L5 1.5L6 .7H8L9 1.5L10.5 3V4.5Z" fill="#ddd" stroke="#000" stroke-width="1"/><path d="M6.8 7.2H15.3V12.5L13.3 14.8H6.8Z" fill="#fff" stroke="#0000ff" stroke-width="1.5"/><path d="M8.8 9.5H13.3M8.8 11.8H12" stroke="#000" stroke-width="1.1"/></svg>
<svg class="txt" width="1194" height="891" viewBox="0 0 1194 891">
<text x="211" y="363.5" font-size="12" fill="#000" stroke="#000" stroke-width=".15" textLength="63" lengthAdjust="spacingAndGlyphs">新規作成(<tspan text-decoration="underline">N</tspan>)</text>
<text x="211" y="393.5" font-size="12" fill="#000" stroke="#000" stroke-width=".15" textLength="38" lengthAdjust="spacingAndGlyphs">開く(<tspan text-decoration="underline">O</tspan>)</text>
<text x="211" y="415.5" font-size="12" fill="#000" stroke="#000" stroke-width=".15" textLength="77" lengthAdjust="spacingAndGlyphs">開く[その他](<tspan text-decoration="underline">H</tspan>)</text>
<text x="211" y="445.5" font-size="12" fill="#000" stroke="#000" stroke-width=".15" textLength="58" lengthAdjust="spacingAndGlyphs">切り取り(<tspan text-decoration="underline">T</tspan>)</text>
<text x="332" y="445.5" font-size="12" fill="#000" stroke="#000" stroke-width=".15" text-anchor="end" textLength="33" lengthAdjust="spacingAndGlyphs">Ctrl+X</text>
<text x="211" y="467.5" font-size="12" fill="#000" stroke="#000" stroke-width=".15" textLength="44" lengthAdjust="spacingAndGlyphs">コピー(<tspan text-decoration="underline">C</tspan>)</text>
<text x="332" y="467.5" font-size="12" fill="#000" stroke="#000" stroke-width=".15" text-anchor="end" textLength="33" lengthAdjust="spacingAndGlyphs">Ctrl+C</text>
<text x="211" y="489.5" font-size="12" fill="#000" stroke="#000" stroke-width=".15" textLength="60" lengthAdjust="spacingAndGlyphs">貼り付け(<tspan text-decoration="underline">P</tspan>)</text>
<text x="332" y="489.5" font-size="12" fill="#000" stroke="#000" stroke-width=".15" text-anchor="end" textLength="33.5" lengthAdjust="spacingAndGlyphs">Ctrl+V</text>
<text x="211" y="511.5" font-size="12" fill="#000" stroke="#000" stroke-width=".15" textLength="42" lengthAdjust="spacingAndGlyphs">削除(<tspan text-decoration="underline">D</tspan>)</text>
<text x="332" y="511.5" font-size="12" fill="#000" stroke="#000" stroke-width=".15" text-anchor="end" textLength="35" lengthAdjust="spacingAndGlyphs">Delete</text>
<text x="211" y="533.5" font-size="12" fill="#000" stroke="#000" stroke-width=".15" textLength="77" lengthAdjust="spacingAndGlyphs">名前の変更(<tspan text-decoration="underline">M</tspan>)</text>
<text x="211" y="563.5" font-size="12" fill="#000" stroke="#000" stroke-width=".15" textLength="63" lengthAdjust="spacingAndGlyphs">コンパイル(<tspan text-decoration="underline">C</tspan>)</text>
<text x="211" y="593.5" font-size="12" fill="#000" stroke="#000" stroke-width=".15" textLength="98" lengthAdjust="spacingAndGlyphs">パスワードの設定(<tspan text-decoration="underline">S</tspan>)</text>
<text x="211" y="615.5" font-size="12" fill="#000" stroke="#000" stroke-width=".15" textLength="98" lengthAdjust="spacingAndGlyphs">パスワードの解除(<tspan text-decoration="underline">A</tspan>)</text>
<text x="211" y="645.5" font-size="12" fill="#000" stroke="#000" stroke-width=".15" textLength="70" lengthAdjust="spacingAndGlyphs">有効/無効(<tspan text-decoration="underline">E</tspan>)</text>
<text x="211" y="675.5" font-size="12" fill="#8a8a8a" stroke="#8a8a8a" stroke-width=".15" textLength="91" lengthAdjust="spacingAndGlyphs">CPラダーの変換(<tspan text-decoration="underline">L</tspan>)</text>
<text x="211" y="705.5" font-size="12" fill="#000" stroke="#000" stroke-width=".15" textLength="60" lengthAdjust="spacingAndGlyphs">インポート(<tspan text-decoration="underline">I</tspan>)</text>
<text x="211" y="727.5" font-size="12" fill="#000" stroke="#000" stroke-width=".15" textLength="71" lengthAdjust="spacingAndGlyphs">エクスポート(<tspan text-decoration="underline">P</tspan>)</text>
<text x="211" y="757.5" font-size="12" fill="#000" stroke="#000" stroke-width=".15" textLength="61" lengthAdjust="spacingAndGlyphs">プロパティ(<tspan text-decoration="underline">R</tspan>)</text>
<text x="211" y="787.5" font-size="12" fill="#000" stroke="#000" stroke-width=".15" textLength="53" lengthAdjust="spacingAndGlyphs">印刷(P)...</text>
</svg>
</body></html>
